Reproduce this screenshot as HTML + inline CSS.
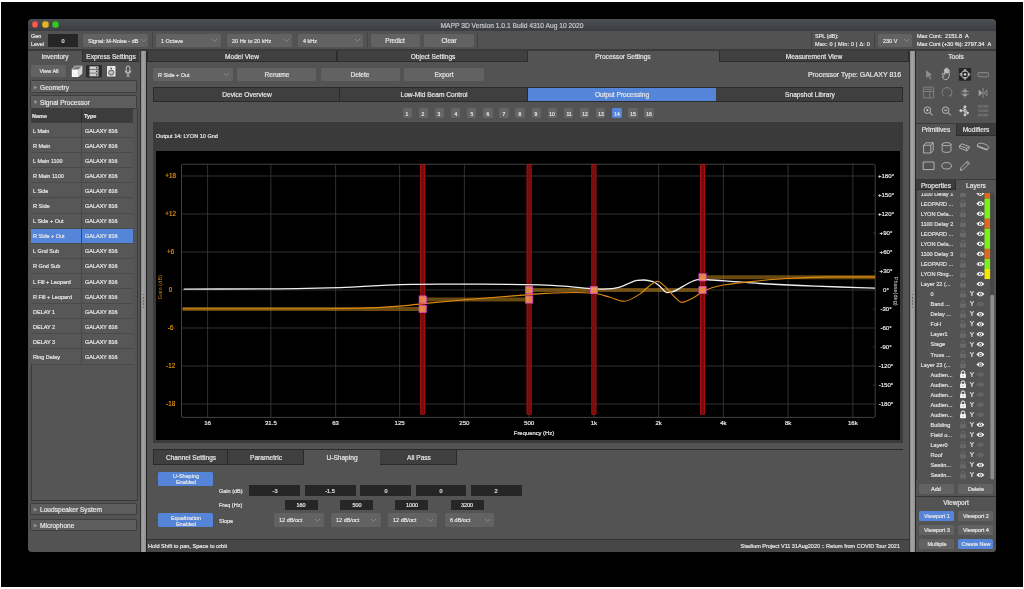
<!DOCTYPE html>
<html><head><meta charset="utf-8"><style>
html,body{margin:0;padding:0;}
body{width:1024px;height:589px;background:#fff;position:relative;overflow:hidden;font-family:"Liberation Sans",sans-serif;}
.a{position:absolute;box-sizing:border-box;}
.a>svg,svg.a{will-change:transform;}
.t{white-space:nowrap;will-change:transform;-webkit-text-stroke:0.2px currentColor;}
</style></head><body>
<div class="a " style="left:1.1px;top:2.1px;width:1022px;height:584.8px;background:#000;"></div>
<div class="a " style="left:28px;top:19px;width:968px;height:532.9px;background:#535353;border-radius:4px;overflow:hidden;"></div>
<div class="a " style="left:28px;top:19px;width:968px;height:12px;background:linear-gradient(#4b4e53,#3a3d42);border-radius:5px 5px 0 0;"></div>
<div class="a " style="left:31.950000000000003px;top:21.45px;width:6.5px;height:6.5px;background:#fc5b53;border-radius:50%;box-shadow:inset 0 0 0 0.7px rgba(0,0,0,0.22);"></div>
<div class="a " style="left:42.05px;top:21.45px;width:6.5px;height:6.5px;background:#e2b62a;border-radius:50%;box-shadow:inset 0 0 0 0.7px rgba(0,0,0,0.22);"></div>
<div class="a " style="left:52.25px;top:21.45px;width:6.5px;height:6.5px;background:#38c42a;border-radius:50%;box-shadow:inset 0 0 0 0.7px rgba(0,0,0,0.22);"></div>
<div class="a t" style="left:312px;top:21.62px;width:400px;text-align:center;font-size:6.7px;line-height:8.04px;color:#c8c8c8;">MAPP 3D Version 1.0.1 Build 4310 Aug 10 2020</div>
<div class="a " style="left:28px;top:30.5px;width:968px;height:18px;background:#525252;"></div>
<div class="a " style="left:28px;top:48.5px;width:968px;height:2px;background:#3a3a3a;"></div>
<div class="a t" style="left:31px;top:33.44px;font-size:5.5px;line-height:6.60px;color:#e6e6e6;">Gen</div>
<div class="a t" style="left:30.8px;top:41.14px;font-size:5.5px;line-height:6.60px;color:#e6e6e6;">Level</div>
<div class="a " style="left:48px;top:34px;width:30px;height:12.7px;background:#262626;"></div>
<div class="a t" style="left:-137px;top:37.54px;width:400px;text-align:center;font-size:5.5px;line-height:6.60px;color:#e6e6e6;">0</div>
<div class="a " style="left:83px;top:34px;width:65px;height:13px;background:#626262;border-radius:1.5px;"></div>
<div class="a t" style="left:87.5px;top:37.64px;font-size:5.5px;line-height:6.60px;color:#e6e6e6;">Signal: M-Noise - dB</div>
<svg class="a" style="left:139.5px;top:38.2px" width="7" height="4.6"><polyline points="1,1 3.5,3.6 6,1" fill="none" stroke="#9a9a9a" stroke-width="0.7"/></svg>
<div class="a " style="left:151.5px;top:32px;width:1.2px;height:17px;background:#444;"></div>
<div class="a " style="left:156px;top:34px;width:65px;height:13px;background:#626262;border-radius:1.5px;"></div>
<div class="a t" style="left:161px;top:37.64px;font-size:5.5px;line-height:6.60px;color:#e6e6e6;">1 Octave</div>
<svg class="a" style="left:211.0px;top:38.2px" width="7" height="4.6"><polyline points="1,1 3.5,3.6 6,1" fill="none" stroke="#9a9a9a" stroke-width="0.7"/></svg>
<div class="a " style="left:226.6px;top:34px;width:65.4px;height:13px;background:#626262;border-radius:1.5px;"></div>
<div class="a t" style="left:231.7px;top:37.64px;font-size:5.5px;line-height:6.60px;color:#e6e6e6;">20 Hz to 20 kHz</div>
<svg class="a" style="left:282.5px;top:38.2px" width="7" height="4.6"><polyline points="1,1 3.5,3.6 6,1" fill="none" stroke="#9a9a9a" stroke-width="0.7"/></svg>
<div class="a " style="left:297.7px;top:34px;width:65.8px;height:13px;background:#626262;border-radius:1.5px;"></div>
<div class="a t" style="left:303px;top:37.64px;font-size:5.5px;line-height:6.60px;color:#e6e6e6;">4 kHz</div>
<svg class="a" style="left:353.5px;top:38.2px" width="7" height="4.6"><polyline points="1,1 3.5,3.6 6,1" fill="none" stroke="#9a9a9a" stroke-width="0.7"/></svg>
<div class="a " style="left:366.5px;top:32px;width:1.2px;height:17px;background:#444;"></div>
<div class="a " style="left:370.5px;top:34px;width:49.5px;height:13px;background:#626262;border-radius:1.5px;"></div>
<div class="a t" style="left:195.25px;top:37.24px;width:400px;text-align:center;font-size:6.27px;line-height:7.52px;color:#e6e6e6;">Predict</div>
<div class="a " style="left:424px;top:34px;width:49.5px;height:13px;background:#626262;border-radius:1.5px;"></div>
<div class="a t" style="left:248.75px;top:37.24px;width:400px;text-align:center;font-size:6.27px;line-height:7.52px;color:#e6e6e6;">Clear</div>
<div class="a " style="left:476.8px;top:32px;width:1.2px;height:17px;background:#444;"></div>
<div class="a " style="left:810.5px;top:32px;width:1.2px;height:17px;background:#444;"></div>
<div class="a t" style="left:815.2px;top:33.34px;font-size:5.5px;line-height:6.60px;color:#e6e6e6;">SPL (dB):</div>
<div class="a t" style="left:815.2px;top:40.74px;font-size:5.5px;line-height:6.60px;color:#e6e6e6;letter-spacing:0.22px;">Max: 0 | Min: 0 | &#916;: 0</div>
<div class="a " style="left:874px;top:32px;width:1.2px;height:17px;background:#444;"></div>
<div class="a " style="left:877.7px;top:34px;width:34.6px;height:13px;background:#626262;border-radius:1.5px;"></div>
<div class="a t" style="left:882.6px;top:37.64px;font-size:5.5px;line-height:6.60px;color:#e6e6e6;">230 V</div>
<svg class="a" style="left:902.9px;top:38.2px" width="7" height="4.6"><polyline points="1,1 3.5,3.6 6,1" fill="none" stroke="#9a9a9a" stroke-width="0.7"/></svg>
<div class="a t" style="left:916.8px;top:33.34px;font-size:5.5px;line-height:6.60px;color:#e6e6e6;">Max Cont:&nbsp; 2151.8 &nbsp;A</div>
<div class="a t" style="left:916.8px;top:40.74px;font-size:5.5px;line-height:6.60px;color:#e6e6e6;">Max Cont (+30 %): 2797.34 &nbsp;A</div>
<div class="a " style="left:139.79999999999998px;top:50.5px;width:1.3px;height:501.4px;background:#333;"></div>
<div class="a " style="left:141.1px;top:50.5px;width:4.8px;height:501.4px;background:linear-gradient(90deg,#8a8a8a,#a4a4a4 40%,#8f8f8f);"></div>
<div class="a " style="left:145.9px;top:50.5px;width:1.4px;height:501.4px;background:#262626;"></div>
<div class="a " style="left:143.0px;top:294.1px;width:1.3px;height:1.4px;background:#686868;"></div>
<div class="a " style="left:143.0px;top:297.20000000000005px;width:1.3px;height:1.4px;background:#686868;"></div>
<div class="a " style="left:143.0px;top:300.3px;width:1.3px;height:1.4px;background:#686868;"></div>
<div class="a " style="left:143.0px;top:303.40000000000003px;width:1.3px;height:1.4px;background:#686868;"></div>
<div class="a " style="left:143.0px;top:306.5px;width:1.3px;height:1.4px;background:#686868;"></div>
<div class="a " style="left:908.6px;top:50.5px;width:1.3px;height:501.4px;background:#333;"></div>
<div class="a " style="left:909.9px;top:50.5px;width:4.8px;height:501.4px;background:linear-gradient(90deg,#8a8a8a,#a4a4a4 40%,#8f8f8f);"></div>
<div class="a " style="left:914.6999999999999px;top:50.5px;width:1.4px;height:501.4px;background:#262626;"></div>
<div class="a " style="left:911.8px;top:294.1px;width:1.3px;height:1.4px;background:#686868;"></div>
<div class="a " style="left:911.8px;top:297.20000000000005px;width:1.3px;height:1.4px;background:#686868;"></div>
<div class="a " style="left:911.8px;top:300.3px;width:1.3px;height:1.4px;background:#686868;"></div>
<div class="a " style="left:911.8px;top:303.40000000000003px;width:1.3px;height:1.4px;background:#686868;"></div>
<div class="a " style="left:911.8px;top:306.5px;width:1.3px;height:1.4px;background:#686868;"></div>
<div class="a " style="left:28px;top:50.5px;width:54px;height:11.8px;background:#535353;"></div>
<div class="a " style="left:82px;top:50.5px;width:57px;height:11.8px;background:#3c3c3c;border-left:1px solid #2e2e2e;border-bottom:1px solid #2e2e2e;"></div>
<div class="a t" style="left:-145px;top:52.97px;width:400px;text-align:center;font-size:6.6px;line-height:7.92px;color:#e6e6e6;">Inventory</div>
<div class="a t" style="left:-89.4px;top:52.97px;width:400px;text-align:center;font-size:6.6px;line-height:7.92px;color:#e6e6e6;">Express Settings</div>
<div class="a " style="left:31px;top:65px;width:35px;height:12px;background:#626262;border-radius:1.5px;"></div>
<div class="a t" style="left:-151.5px;top:68.14px;width:400px;text-align:center;font-size:5.5px;line-height:6.60px;color:#e6e6e6;">View All</div>
<svg class="a" style="left:70px;top:64px" width="68" height="15" viewBox="70 64 68 15">
<polygon points="71.8,69.8 74.6,66.1 82.3,66.1 78.6,69.8" fill="#7a7a7a" stroke="#e8e8e8" stroke-width="0.6"/>
<polygon points="78.6,69.8 82.3,66.1 82.3,73.4 78.6,77" fill="#d8d8d8"/>
<rect x="71.8" y="69.8" width="6.8" height="7.2" fill="#f4f4f4"/>
<rect x="86" y="65" width="16" height="12.5" rx="1" fill="#2b2b2b"/>
<rect x="89.5" y="66.3" width="9" height="3" fill="#cfcfcf"/>
<rect x="89.5" y="69.8" width="9" height="3" fill="#cfcfcf"/>
<rect x="89.5" y="73.3" width="9" height="3" fill="#cfcfcf"/>
<rect x="96" y="67.2" width="1.5" height="1.2" fill="#333"/><rect x="96" y="70.7" width="1.5" height="1.2" fill="#333"/><rect x="96" y="74.2" width="1.5" height="1.2" fill="#333"/>
<rect x="107" y="66" width="8.5" height="10.5" fill="#e6e6e6"/>
<circle cx="111.2" cy="72.6" r="2.5" fill="none" stroke="#3a3a3a" stroke-width="0.9"/>
<circle cx="111.2" cy="72.6" r="1.1" fill="none" stroke="#777" stroke-width="0.5"/>
<circle cx="111.2" cy="68.4" r="0.8" fill="#555"/>
<rect x="126.3" y="66" width="3.5" height="6.5" rx="1.75" fill="none" stroke="#e0e0e0" stroke-width="0.8"/>
<path d="M125,70.5 a3,3 0 0 0 6,0 M128,73.5 v2.5 M126.3,76 h3.5" fill="none" stroke="#e0e0e0" stroke-width="0.7"/>
</svg>
<div class="a " style="left:30.1px;top:80.4px;width:107.4px;height:13.1px;background:#5d5d5d;border:1px solid #3e3e3e;border-radius:1.5px;"></div>
<div class="a t" style="left:33.6px;top:84.09px;font-size:5.5px;line-height:6.60px;color:#9a9a9a;">&#9656;</div>
<div class="a t" style="left:39.9px;top:83.72px;font-size:6.6px;line-height:7.92px;color:#e6e6e6;">Geometry</div>
<div class="a " style="left:30.1px;top:95.3px;width:107.4px;height:13.6px;background:#5d5d5d;border:1px solid #3e3e3e;border-radius:1.5px;"></div>
<div class="a t" style="left:33.6px;top:99.24px;font-size:5.5px;line-height:6.60px;color:#9a9a9a;">&#9662;</div>
<div class="a t" style="left:39.9px;top:98.87px;font-size:6.6px;line-height:7.92px;color:#e6e6e6;">Signal Processor</div>
<div class="a " style="left:30.5px;top:109px;width:107px;height:391.5px;background:#555;border:1px solid #3a3a3a;border-top:none;"></div>
<div class="a " style="left:31px;top:109px;width:50.5px;height:14px;background:#3c3c3c;border-right:1px solid #2a2a2a;"></div>
<div class="a " style="left:81.5px;top:109px;width:51.8px;height:14px;background:#3c3c3c;"></div>
<div class="a t" style="left:32.3px;top:113.14px;font-size:5.5px;line-height:6.60px;color:#e6e6e6;"><b>Name</b></div>
<div class="a t" style="left:84px;top:113.14px;font-size:5.5px;line-height:6.60px;color:#e6e6e6;"><b>Type</b></div>
<div class="a " style="left:133.3px;top:109px;width:3.7px;height:391px;background:#545454;"></div>
<div class="a " style="left:31px;top:123.0px;width:50.5px;height:15.1px;background:#575757;border-bottom:1px solid #4a4a4a;border-right:1px solid #484848;"></div>
<div class="a " style="left:81.5px;top:123.0px;width:51.8px;height:15.1px;background:#575757;border-bottom:1px solid #4a4a4a;"></div>
<div class="a t" style="left:32.5px;top:127.54px;font-size:5.5px;line-height:6.60px;color:#e6e6e6;">L Main</div>
<div class="a t" style="left:84.5px;top:127.54px;font-size:5.5px;line-height:6.60px;color:#e6e6e6;">GALAXY 816</div>
<div class="a " style="left:31px;top:138.1px;width:50.5px;height:15.1px;background:#575757;border-bottom:1px solid #4a4a4a;border-right:1px solid #484848;"></div>
<div class="a " style="left:81.5px;top:138.1px;width:51.8px;height:15.1px;background:#575757;border-bottom:1px solid #4a4a4a;"></div>
<div class="a t" style="left:32.5px;top:142.64px;font-size:5.5px;line-height:6.60px;color:#e6e6e6;">R Main</div>
<div class="a t" style="left:84.5px;top:142.64px;font-size:5.5px;line-height:6.60px;color:#e6e6e6;">GALAXY 816</div>
<div class="a " style="left:31px;top:153.2px;width:50.5px;height:15.1px;background:#575757;border-bottom:1px solid #4a4a4a;border-right:1px solid #484848;"></div>
<div class="a " style="left:81.5px;top:153.2px;width:51.8px;height:15.1px;background:#575757;border-bottom:1px solid #4a4a4a;"></div>
<div class="a t" style="left:32.5px;top:157.74px;font-size:5.5px;line-height:6.60px;color:#e6e6e6;">L Main 1100</div>
<div class="a t" style="left:84.5px;top:157.74px;font-size:5.5px;line-height:6.60px;color:#e6e6e6;">GALAXY 816</div>
<div class="a " style="left:31px;top:168.3px;width:50.5px;height:15.1px;background:#575757;border-bottom:1px solid #4a4a4a;border-right:1px solid #484848;"></div>
<div class="a " style="left:81.5px;top:168.3px;width:51.8px;height:15.1px;background:#575757;border-bottom:1px solid #4a4a4a;"></div>
<div class="a t" style="left:32.5px;top:172.84px;font-size:5.5px;line-height:6.60px;color:#e6e6e6;">R Main 1100</div>
<div class="a t" style="left:84.5px;top:172.84px;font-size:5.5px;line-height:6.60px;color:#e6e6e6;">GALAXY 816</div>
<div class="a " style="left:31px;top:183.4px;width:50.5px;height:15.1px;background:#575757;border-bottom:1px solid #4a4a4a;border-right:1px solid #484848;"></div>
<div class="a " style="left:81.5px;top:183.4px;width:51.8px;height:15.1px;background:#575757;border-bottom:1px solid #4a4a4a;"></div>
<div class="a t" style="left:32.5px;top:187.94px;font-size:5.5px;line-height:6.60px;color:#e6e6e6;">L Side</div>
<div class="a t" style="left:84.5px;top:187.94px;font-size:5.5px;line-height:6.60px;color:#e6e6e6;">GALAXY 816</div>
<div class="a " style="left:31px;top:198.5px;width:50.5px;height:15.1px;background:#575757;border-bottom:1px solid #4a4a4a;border-right:1px solid #484848;"></div>
<div class="a " style="left:81.5px;top:198.5px;width:51.8px;height:15.1px;background:#575757;border-bottom:1px solid #4a4a4a;"></div>
<div class="a t" style="left:32.5px;top:203.04px;font-size:5.5px;line-height:6.60px;color:#e6e6e6;">R Side</div>
<div class="a t" style="left:84.5px;top:203.04px;font-size:5.5px;line-height:6.60px;color:#e6e6e6;">GALAXY 816</div>
<div class="a " style="left:31px;top:213.6px;width:50.5px;height:15.1px;background:#575757;border-bottom:1px solid #4a4a4a;border-right:1px solid #484848;"></div>
<div class="a " style="left:81.5px;top:213.6px;width:51.8px;height:15.1px;background:#575757;border-bottom:1px solid #4a4a4a;"></div>
<div class="a t" style="left:32.5px;top:218.14px;font-size:5.5px;line-height:6.60px;color:#e6e6e6;">L Side + Out</div>
<div class="a t" style="left:84.5px;top:218.14px;font-size:5.5px;line-height:6.60px;color:#e6e6e6;">GALAXY 816</div>
<div class="a " style="left:31px;top:228.7px;width:50.5px;height:15.1px;background:#5585d8;border-bottom:1px solid #4a4a4a;border-right:1px solid #484848;"></div>
<div class="a " style="left:81.5px;top:228.7px;width:51.8px;height:15.1px;background:#5585d8;border-bottom:1px solid #4a4a4a;"></div>
<div class="a t" style="left:32.5px;top:233.24px;font-size:5.5px;line-height:6.60px;color:#e6e6e6;">R Side + Out</div>
<div class="a t" style="left:84.5px;top:233.24px;font-size:5.5px;line-height:6.60px;color:#e6e6e6;">GALAXY 816</div>
<div class="a " style="left:31px;top:243.8px;width:50.5px;height:15.1px;background:#575757;border-bottom:1px solid #4a4a4a;border-right:1px solid #484848;"></div>
<div class="a " style="left:81.5px;top:243.8px;width:51.8px;height:15.1px;background:#575757;border-bottom:1px solid #4a4a4a;"></div>
<div class="a t" style="left:32.5px;top:248.34px;font-size:5.5px;line-height:6.60px;color:#e6e6e6;">L Gnd Sub</div>
<div class="a t" style="left:84.5px;top:248.34px;font-size:5.5px;line-height:6.60px;color:#e6e6e6;">GALAXY 816</div>
<div class="a " style="left:31px;top:258.9px;width:50.5px;height:15.1px;background:#575757;border-bottom:1px solid #4a4a4a;border-right:1px solid #484848;"></div>
<div class="a " style="left:81.5px;top:258.9px;width:51.8px;height:15.1px;background:#575757;border-bottom:1px solid #4a4a4a;"></div>
<div class="a t" style="left:32.5px;top:263.44px;font-size:5.5px;line-height:6.60px;color:#e6e6e6;">R Gnd Sub</div>
<div class="a t" style="left:84.5px;top:263.44px;font-size:5.5px;line-height:6.60px;color:#e6e6e6;">GALAXY 816</div>
<div class="a " style="left:31px;top:274.0px;width:50.5px;height:15.1px;background:#575757;border-bottom:1px solid #4a4a4a;border-right:1px solid #484848;"></div>
<div class="a " style="left:81.5px;top:274.0px;width:51.8px;height:15.1px;background:#575757;border-bottom:1px solid #4a4a4a;"></div>
<div class="a t" style="left:32.5px;top:278.54px;font-size:5.5px;line-height:6.60px;color:#e6e6e6;">L Fill + Leopard</div>
<div class="a t" style="left:84.5px;top:278.54px;font-size:5.5px;line-height:6.60px;color:#e6e6e6;">GALAXY 816</div>
<div class="a " style="left:31px;top:289.1px;width:50.5px;height:15.1px;background:#575757;border-bottom:1px solid #4a4a4a;border-right:1px solid #484848;"></div>
<div class="a " style="left:81.5px;top:289.1px;width:51.8px;height:15.1px;background:#575757;border-bottom:1px solid #4a4a4a;"></div>
<div class="a t" style="left:32.5px;top:293.64px;font-size:5.5px;line-height:6.60px;color:#e6e6e6;">R Fill + Leopard</div>
<div class="a t" style="left:84.5px;top:293.64px;font-size:5.5px;line-height:6.60px;color:#e6e6e6;">GALAXY 816</div>
<div class="a " style="left:31px;top:304.2px;width:50.5px;height:15.1px;background:#575757;border-bottom:1px solid #4a4a4a;border-right:1px solid #484848;"></div>
<div class="a " style="left:81.5px;top:304.2px;width:51.8px;height:15.1px;background:#575757;border-bottom:1px solid #4a4a4a;"></div>
<div class="a t" style="left:32.5px;top:308.74px;font-size:5.5px;line-height:6.60px;color:#e6e6e6;">DELAY 1</div>
<div class="a t" style="left:84.5px;top:308.74px;font-size:5.5px;line-height:6.60px;color:#e6e6e6;">GALAXY 816</div>
<div class="a " style="left:31px;top:319.29999999999995px;width:50.5px;height:15.1px;background:#575757;border-bottom:1px solid #4a4a4a;border-right:1px solid #484848;"></div>
<div class="a " style="left:81.5px;top:319.29999999999995px;width:51.8px;height:15.1px;background:#575757;border-bottom:1px solid #4a4a4a;"></div>
<div class="a t" style="left:32.5px;top:323.84px;font-size:5.5px;line-height:6.60px;color:#e6e6e6;">DELAY 2</div>
<div class="a t" style="left:84.5px;top:323.84px;font-size:5.5px;line-height:6.60px;color:#e6e6e6;">GALAXY 816</div>
<div class="a " style="left:31px;top:334.4px;width:50.5px;height:15.1px;background:#575757;border-bottom:1px solid #4a4a4a;border-right:1px solid #484848;"></div>
<div class="a " style="left:81.5px;top:334.4px;width:51.8px;height:15.1px;background:#575757;border-bottom:1px solid #4a4a4a;"></div>
<div class="a t" style="left:32.5px;top:338.94px;font-size:5.5px;line-height:6.60px;color:#e6e6e6;">DELAY 3</div>
<div class="a t" style="left:84.5px;top:338.94px;font-size:5.5px;line-height:6.60px;color:#e6e6e6;">GALAXY 816</div>
<div class="a " style="left:31px;top:349.5px;width:50.5px;height:15.1px;background:#575757;border-bottom:1px solid #4a4a4a;border-right:1px solid #484848;"></div>
<div class="a " style="left:81.5px;top:349.5px;width:51.8px;height:15.1px;background:#575757;border-bottom:1px solid #4a4a4a;"></div>
<div class="a t" style="left:32.5px;top:354.04px;font-size:5.5px;line-height:6.60px;color:#e6e6e6;">Ring Delay</div>
<div class="a t" style="left:84.5px;top:354.04px;font-size:5.5px;line-height:6.60px;color:#e6e6e6;">GALAXY 816</div>
<div class="a " style="left:30.1px;top:502.6px;width:107.4px;height:12.8px;background:#5d5d5d;border:1px solid #3e3e3e;border-radius:1.5px;"></div>
<div class="a t" style="left:33.6px;top:506.14px;font-size:5.5px;line-height:6.60px;color:#9a9a9a;">&#9656;</div>
<div class="a t" style="left:39.9px;top:505.77px;font-size:6.6px;line-height:7.92px;color:#e6e6e6;">Loudspeaker System</div>
<div class="a " style="left:30.1px;top:518.7px;width:107.4px;height:12.8px;background:#5d5d5d;border:1px solid #3e3e3e;border-radius:1.5px;"></div>
<div class="a t" style="left:33.6px;top:522.24px;font-size:5.5px;line-height:6.60px;color:#9a9a9a;">&#9656;</div>
<div class="a t" style="left:39.9px;top:521.87px;font-size:6.6px;line-height:7.92px;color:#e6e6e6;">Microphone</div>
<div class="a " style="left:147.2px;top:50.5px;width:761.4px;height:501.4px;background:#535353;"></div>
<div class="a " style="left:147.2px;top:50.5px;width:189.8px;height:11.5px;background:#404040;border-left:1px solid #2c2c2c;border-right:1px solid #2c2c2c;border-bottom:1px solid #2c2c2c;"></div>
<div class="a t" style="left:42.099999999999994px;top:52.87px;width:400px;text-align:center;font-size:6.6px;line-height:7.92px;color:#e6e6e6;">Model View</div>
<div class="a " style="left:337px;top:50.5px;width:191px;height:11.5px;background:#404040;border-left:1px solid #2c2c2c;border-right:1px solid #2c2c2c;border-bottom:1px solid #2c2c2c;"></div>
<div class="a t" style="left:232.5px;top:52.87px;width:400px;text-align:center;font-size:6.6px;line-height:7.92px;color:#e6e6e6;">Object Settings</div>
<div class="a " style="left:528px;top:50.5px;width:190.5px;height:11.5px;background:#535353;"></div>
<div class="a t" style="left:423.25px;top:52.87px;width:400px;text-align:center;font-size:6.6px;line-height:7.92px;color:#e6e6e6;">Processor Settings</div>
<div class="a " style="left:718.5px;top:50.5px;width:190.29999999999995px;height:11.5px;background:#404040;border-left:1px solid #2c2c2c;border-right:1px solid #2c2c2c;border-bottom:1px solid #2c2c2c;"></div>
<div class="a t" style="left:613.65px;top:52.87px;width:400px;text-align:center;font-size:6.6px;line-height:7.92px;color:#e6e6e6;">Measurement View</div>
<div class="a " style="left:153px;top:68px;width:80px;height:13px;background:#626262;border-radius:1.5px;"></div>
<div class="a t" style="left:158px;top:71.64px;font-size:5.5px;line-height:6.60px;color:#e6e6e6;">R Side + Out</div>
<svg class="a" style="left:223.0px;top:72.2px" width="7" height="4.6"><polyline points="1,1 3.5,3.6 6,1" fill="none" stroke="#9a9a9a" stroke-width="0.7"/></svg>
<div class="a " style="left:237px;top:68px;width:79px;height:13px;background:#626262;border-radius:1.5px;"></div>
<div class="a t" style="left:76.5px;top:71.07px;width:400px;text-align:center;font-size:6.6px;line-height:7.92px;color:#e6e6e6;">Rename</div>
<div class="a " style="left:320.5px;top:68px;width:79.5px;height:13px;background:#626262;border-radius:1.5px;"></div>
<div class="a t" style="left:160.25px;top:71.07px;width:400px;text-align:center;font-size:6.6px;line-height:7.92px;color:#e6e6e6;">Delete</div>
<div class="a " style="left:404px;top:68px;width:80px;height:13px;background:#626262;border-radius:1.5px;"></div>
<div class="a t" style="left:244.0px;top:71.07px;width:400px;text-align:center;font-size:6.6px;line-height:7.92px;color:#e6e6e6;">Export</div>
<div class="a t" style="left:501.29999999999995px;top:71.19px;width:400px;text-align:right;font-size:6.95px;line-height:8.34px;color:#e6e6e6;">Processor Type: GALAXY 816</div>
<div class="a " style="left:153px;top:86.8px;width:187px;height:14.8px;background:#3f3f3f;border:1px solid #2a2a2a;"></div>
<div class="a t" style="left:46.5px;top:90.87px;width:400px;text-align:center;font-size:6.6px;line-height:7.92px;color:#e6e6e6;">Device Overview</div>
<div class="a " style="left:340px;top:86.8px;width:188px;height:14.8px;background:#3f3f3f;border:1px solid #2a2a2a;border-left:none;"></div>
<div class="a t" style="left:234.0px;top:90.87px;width:400px;text-align:center;font-size:6.6px;line-height:7.92px;color:#e6e6e6;">Low-Mid Beam Control</div>
<div class="a " style="left:528px;top:86.8px;width:188px;height:14.8px;background:#5585d8;border:1px solid #2c2c2c;border-left:none;border-right:none;"></div>
<div class="a t" style="left:422.0px;top:90.87px;width:400px;text-align:center;font-size:6.6px;line-height:7.92px;color:#e6e6e6;">Output Processing</div>
<div class="a " style="left:716px;top:86.8px;width:187.20000000000005px;height:14.8px;background:#3f3f3f;border:1px solid #2a2a2a;border-left:none;"></div>
<div class="a t" style="left:609.6px;top:90.87px;width:400px;text-align:center;font-size:6.6px;line-height:7.92px;color:#e6e6e6;">Snapshot Library</div>
<div class="a " style="left:402.5px;top:108px;width:9.4px;height:10.3px;background:#656565;border-radius:1.5px;"></div>
<div class="a t" style="left:207.2px;top:110.60px;width:400px;text-align:center;font-size:5.0px;line-height:6.00px;color:#e6e6e6;">1</div>
<div class="a " style="left:418.63px;top:108px;width:9.4px;height:10.3px;background:#656565;border-radius:1.5px;"></div>
<div class="a t" style="left:223.32999999999998px;top:110.60px;width:400px;text-align:center;font-size:5.0px;line-height:6.00px;color:#e6e6e6;">2</div>
<div class="a " style="left:434.76px;top:108px;width:9.4px;height:10.3px;background:#656565;border-radius:1.5px;"></div>
<div class="a t" style="left:239.45999999999998px;top:110.60px;width:400px;text-align:center;font-size:5.0px;line-height:6.00px;color:#e6e6e6;">3</div>
<div class="a " style="left:450.89px;top:108px;width:9.4px;height:10.3px;background:#656565;border-radius:1.5px;"></div>
<div class="a t" style="left:255.58999999999997px;top:110.60px;width:400px;text-align:center;font-size:5.0px;line-height:6.00px;color:#e6e6e6;">4</div>
<div class="a " style="left:467.02px;top:108px;width:9.4px;height:10.3px;background:#656565;border-radius:1.5px;"></div>
<div class="a t" style="left:271.71999999999997px;top:110.60px;width:400px;text-align:center;font-size:5.0px;line-height:6.00px;color:#e6e6e6;">5</div>
<div class="a " style="left:483.15px;top:108px;width:9.4px;height:10.3px;background:#656565;border-radius:1.5px;"></div>
<div class="a t" style="left:287.84999999999997px;top:110.60px;width:400px;text-align:center;font-size:5.0px;line-height:6.00px;color:#e6e6e6;">6</div>
<div class="a " style="left:499.28000000000003px;top:108px;width:9.4px;height:10.3px;background:#656565;border-radius:1.5px;"></div>
<div class="a t" style="left:303.98px;top:110.60px;width:400px;text-align:center;font-size:5.0px;line-height:6.00px;color:#e6e6e6;">7</div>
<div class="a " style="left:515.41px;top:108px;width:9.4px;height:10.3px;background:#656565;border-radius:1.5px;"></div>
<div class="a t" style="left:320.11px;top:110.60px;width:400px;text-align:center;font-size:5.0px;line-height:6.00px;color:#e6e6e6;">8</div>
<div class="a " style="left:531.54px;top:108px;width:9.4px;height:10.3px;background:#656565;border-radius:1.5px;"></div>
<div class="a t" style="left:336.24px;top:110.60px;width:400px;text-align:center;font-size:5.0px;line-height:6.00px;color:#e6e6e6;">9</div>
<div class="a " style="left:547.67px;top:108px;width:9.4px;height:10.3px;background:#656565;border-radius:1.5px;"></div>
<div class="a t" style="left:352.37px;top:110.60px;width:400px;text-align:center;font-size:5.0px;line-height:6.00px;color:#e6e6e6;">10</div>
<div class="a " style="left:563.8px;top:108px;width:9.4px;height:10.3px;background:#656565;border-radius:1.5px;"></div>
<div class="a t" style="left:368.5px;top:110.60px;width:400px;text-align:center;font-size:5.0px;line-height:6.00px;color:#e6e6e6;">11</div>
<div class="a " style="left:579.93px;top:108px;width:9.4px;height:10.3px;background:#656565;border-radius:1.5px;"></div>
<div class="a t" style="left:384.63px;top:110.60px;width:400px;text-align:center;font-size:5.0px;line-height:6.00px;color:#e6e6e6;">12</div>
<div class="a " style="left:596.06px;top:108px;width:9.4px;height:10.3px;background:#656565;border-radius:1.5px;"></div>
<div class="a t" style="left:400.76px;top:110.60px;width:400px;text-align:center;font-size:5.0px;line-height:6.00px;color:#e6e6e6;">13</div>
<div class="a " style="left:612.1899999999999px;top:108px;width:9.4px;height:10.3px;background:#5585d8;border-radius:1.5px;"></div>
<div class="a t" style="left:416.89px;top:110.60px;width:400px;text-align:center;font-size:5.0px;line-height:6.00px;color:#e6e6e6;">14</div>
<div class="a " style="left:628.3199999999999px;top:108px;width:9.4px;height:10.3px;background:#656565;border-radius:1.5px;"></div>
<div class="a t" style="left:433.02px;top:110.60px;width:400px;text-align:center;font-size:5.0px;line-height:6.00px;color:#e6e6e6;">15</div>
<div class="a " style="left:644.4499999999999px;top:108px;width:9.4px;height:10.3px;background:#656565;border-radius:1.5px;"></div>
<div class="a t" style="left:449.15px;top:110.60px;width:400px;text-align:center;font-size:5.0px;line-height:6.00px;color:#e6e6e6;">16</div>
<div class="a " style="left:153px;top:121.5px;width:750.2px;height:321px;background:#3a3a3a;"></div>
<div class="a t" style="left:155.7px;top:133.11px;font-size:5.55px;line-height:6.66px;color:#e6e6e6;">Output 14: LYON 10 Gnd</div>
<div class="a " style="left:156px;top:151px;width:744px;height:289px;background:#000;"></div>
<svg class="a" style="left:156px;top:151px" width="744" height="289" viewBox="156 151 744 289">
<rect x="156" y="151" width="744" height="289" fill="#000"/>
<line x1="181.5" y1="176" x2="875.2" y2="176" stroke="#363636" stroke-width="0.9"/>
<line x1="181.5" y1="214" x2="875.2" y2="214" stroke="#363636" stroke-width="0.9"/>
<line x1="181.5" y1="252" x2="875.2" y2="252" stroke="#363636" stroke-width="0.9"/>
<line x1="181.5" y1="290" x2="875.2" y2="290" stroke="#363636" stroke-width="0.9"/>
<line x1="181.5" y1="328" x2="875.2" y2="328" stroke="#363636" stroke-width="0.9"/>
<line x1="181.5" y1="366" x2="875.2" y2="366" stroke="#363636" stroke-width="0.9"/>
<line x1="181.5" y1="404" x2="875.2" y2="404" stroke="#363636" stroke-width="0.9"/>
<line x1="873.2" y1="195" x2="875.2" y2="195" stroke="#363636" stroke-width="0.9"/>
<line x1="873.2" y1="233" x2="875.2" y2="233" stroke="#363636" stroke-width="0.9"/>
<line x1="873.2" y1="271" x2="875.2" y2="271" stroke="#363636" stroke-width="0.9"/>
<line x1="873.2" y1="309" x2="875.2" y2="309" stroke="#363636" stroke-width="0.9"/>
<line x1="873.2" y1="347" x2="875.2" y2="347" stroke="#363636" stroke-width="0.9"/>
<line x1="873.2" y1="385" x2="875.2" y2="385" stroke="#363636" stroke-width="0.9"/>
<line x1="207.60" y1="164.2" x2="207.60" y2="417.4" stroke="#363636" stroke-width="0.9"/>
<line x1="270.88" y1="164.2" x2="270.88" y2="417.4" stroke="#363636" stroke-width="0.9"/>
<line x1="335.63" y1="164.2" x2="335.63" y2="417.4" stroke="#363636" stroke-width="0.9"/>
<line x1="399.63" y1="164.2" x2="399.63" y2="417.4" stroke="#363636" stroke-width="0.9"/>
<line x1="464.38" y1="164.2" x2="464.38" y2="417.4" stroke="#363636" stroke-width="0.9"/>
<line x1="529.13" y1="164.2" x2="529.13" y2="417.4" stroke="#363636" stroke-width="0.9"/>
<line x1="593.88" y1="164.2" x2="593.88" y2="417.4" stroke="#363636" stroke-width="0.9"/>
<line x1="658.63" y1="164.2" x2="658.63" y2="417.4" stroke="#363636" stroke-width="0.9"/>
<line x1="723.38" y1="164.2" x2="723.38" y2="417.4" stroke="#363636" stroke-width="0.9"/>
<line x1="788.13" y1="164.2" x2="788.13" y2="417.4" stroke="#363636" stroke-width="0.9"/>
<line x1="852.88" y1="164.2" x2="852.88" y2="417.4" stroke="#363636" stroke-width="0.9"/>
<rect x="181.5" y="164.2" width="693.70" height="253.20" rx="1.5" fill="none" stroke="#4a4a4a" stroke-width="0.9"/>
<text x="170.6" y="178.2" text-anchor="middle" font-size="6.3" fill="#e38f10" stroke="#e38f10" stroke-width="0.2" style="font-family:Liberation Sans,sans-serif">+18</text>
<text x="170.6" y="216.2" text-anchor="middle" font-size="6.3" fill="#e38f10" stroke="#e38f10" stroke-width="0.2" style="font-family:Liberation Sans,sans-serif">+12</text>
<text x="170.6" y="254.2" text-anchor="middle" font-size="6.3" fill="#e38f10" stroke="#e38f10" stroke-width="0.2" style="font-family:Liberation Sans,sans-serif">+6</text>
<text x="170.6" y="292.2" text-anchor="middle" font-size="6.3" fill="#e38f10" stroke="#e38f10" stroke-width="0.2" style="font-family:Liberation Sans,sans-serif">0</text>
<text x="170.6" y="330.2" text-anchor="middle" font-size="6.3" fill="#e38f10" stroke="#e38f10" stroke-width="0.2" style="font-family:Liberation Sans,sans-serif">-6</text>
<text x="170.6" y="368.2" text-anchor="middle" font-size="6.3" fill="#e38f10" stroke="#e38f10" stroke-width="0.2" style="font-family:Liberation Sans,sans-serif">-12</text>
<text x="170.6" y="406.2" text-anchor="middle" font-size="6.3" fill="#e38f10" stroke="#e38f10" stroke-width="0.2" style="font-family:Liberation Sans,sans-serif">-18</text>
<text x="886" y="178.1" text-anchor="middle" font-size="6.1" fill="#e6e6e6" stroke="#e6e6e6" stroke-width="0.2" style="font-family:Liberation Sans,sans-serif">+180&#176;</text>
<text x="886" y="197.1" text-anchor="middle" font-size="6.1" fill="#e6e6e6" stroke="#e6e6e6" stroke-width="0.2" style="font-family:Liberation Sans,sans-serif">+150&#176;</text>
<text x="886" y="216.1" text-anchor="middle" font-size="6.1" fill="#e6e6e6" stroke="#e6e6e6" stroke-width="0.2" style="font-family:Liberation Sans,sans-serif">+120&#176;</text>
<text x="886" y="235.1" text-anchor="middle" font-size="6.1" fill="#e6e6e6" stroke="#e6e6e6" stroke-width="0.2" style="font-family:Liberation Sans,sans-serif">+90&#176;</text>
<text x="886" y="254.1" text-anchor="middle" font-size="6.1" fill="#e6e6e6" stroke="#e6e6e6" stroke-width="0.2" style="font-family:Liberation Sans,sans-serif">+60&#176;</text>
<text x="886" y="273.1" text-anchor="middle" font-size="6.1" fill="#e6e6e6" stroke="#e6e6e6" stroke-width="0.2" style="font-family:Liberation Sans,sans-serif">+30&#176;</text>
<text x="886" y="292.1" text-anchor="middle" font-size="6.1" fill="#e6e6e6" stroke="#e6e6e6" stroke-width="0.2" style="font-family:Liberation Sans,sans-serif">0&#176;</text>
<text x="886" y="311.1" text-anchor="middle" font-size="6.1" fill="#e6e6e6" stroke="#e6e6e6" stroke-width="0.2" style="font-family:Liberation Sans,sans-serif">-30&#176;</text>
<text x="886" y="330.1" text-anchor="middle" font-size="6.1" fill="#e6e6e6" stroke="#e6e6e6" stroke-width="0.2" style="font-family:Liberation Sans,sans-serif">-60&#176;</text>
<text x="886" y="349.1" text-anchor="middle" font-size="6.1" fill="#e6e6e6" stroke="#e6e6e6" stroke-width="0.2" style="font-family:Liberation Sans,sans-serif">-90&#176;</text>
<text x="886" y="368.1" text-anchor="middle" font-size="6.1" fill="#e6e6e6" stroke="#e6e6e6" stroke-width="0.2" style="font-family:Liberation Sans,sans-serif">-120&#176;</text>
<text x="886" y="387.1" text-anchor="middle" font-size="6.1" fill="#e6e6e6" stroke="#e6e6e6" stroke-width="0.2" style="font-family:Liberation Sans,sans-serif">-150&#176;</text>
<text x="886" y="406.1" text-anchor="middle" font-size="6.1" fill="#e6e6e6" stroke="#e6e6e6" stroke-width="0.2" style="font-family:Liberation Sans,sans-serif">-180&#176;</text>
<text x="207.60" y="424.6" text-anchor="middle" font-size="6.1" fill="#e6e6e6" stroke="#e6e6e6" stroke-width="0.2" style="font-family:Liberation Sans,sans-serif">16</text>
<text x="270.88" y="424.6" text-anchor="middle" font-size="6.1" fill="#e6e6e6" stroke="#e6e6e6" stroke-width="0.2" style="font-family:Liberation Sans,sans-serif">31.5</text>
<text x="335.63" y="424.6" text-anchor="middle" font-size="6.1" fill="#e6e6e6" stroke="#e6e6e6" stroke-width="0.2" style="font-family:Liberation Sans,sans-serif">63</text>
<text x="399.63" y="424.6" text-anchor="middle" font-size="6.1" fill="#e6e6e6" stroke="#e6e6e6" stroke-width="0.2" style="font-family:Liberation Sans,sans-serif">125</text>
<text x="464.38" y="424.6" text-anchor="middle" font-size="6.1" fill="#e6e6e6" stroke="#e6e6e6" stroke-width="0.2" style="font-family:Liberation Sans,sans-serif">250</text>
<text x="529.13" y="424.6" text-anchor="middle" font-size="6.1" fill="#e6e6e6" stroke="#e6e6e6" stroke-width="0.2" style="font-family:Liberation Sans,sans-serif">500</text>
<text x="593.88" y="424.6" text-anchor="middle" font-size="6.1" fill="#e6e6e6" stroke="#e6e6e6" stroke-width="0.2" style="font-family:Liberation Sans,sans-serif">1k</text>
<text x="658.63" y="424.6" text-anchor="middle" font-size="6.1" fill="#e6e6e6" stroke="#e6e6e6" stroke-width="0.2" style="font-family:Liberation Sans,sans-serif">2k</text>
<text x="723.38" y="424.6" text-anchor="middle" font-size="6.1" fill="#e6e6e6" stroke="#e6e6e6" stroke-width="0.2" style="font-family:Liberation Sans,sans-serif">4k</text>
<text x="788.13" y="424.6" text-anchor="middle" font-size="6.1" fill="#e6e6e6" stroke="#e6e6e6" stroke-width="0.2" style="font-family:Liberation Sans,sans-serif">8k</text>
<text x="852.88" y="424.6" text-anchor="middle" font-size="6.1" fill="#e6e6e6" stroke="#e6e6e6" stroke-width="0.2" style="font-family:Liberation Sans,sans-serif">16k</text>
<text x="534" y="435.3" text-anchor="middle" font-size="5.85" fill="#e6e6e6" stroke="#e6e6e6" stroke-width="0.2" style="font-family:Liberation Sans,sans-serif">Frequency (Hz)</text>
<text transform="translate(161.6,287.1) rotate(-90)" text-anchor="middle" font-size="5.7" fill="#c07a10" style="font-family:Liberation Sans,sans-serif">Gain (dB)</text>
<text transform="translate(894.4,291.2) rotate(90)" text-anchor="middle" font-size="5.6" fill="#d8d8d8" style="font-family:Liberation Sans,sans-serif">Phase(deg)</text>
<rect x="420.14" y="164.3" width="5.1" height="250.5" rx="1.2" fill="#b81414"/>
<rect x="420.94" y="165.1" width="3.5" height="248.9" fill="#7c0a0a"/>
<line x1="422.69" y1="165.1" x2="422.69" y2="414" stroke="#6c1414" stroke-width="0.9"/>
<rect x="526.58" y="164.3" width="5.1" height="250.5" rx="1.2" fill="#b81414"/>
<rect x="527.38" y="165.1" width="3.5" height="248.9" fill="#7c0a0a"/>
<line x1="529.13" y1="165.1" x2="529.13" y2="414" stroke="#6c1414" stroke-width="0.9"/>
<rect x="591.33" y="164.3" width="5.1" height="250.5" rx="1.2" fill="#b81414"/>
<rect x="592.13" y="165.1" width="3.5" height="248.9" fill="#7c0a0a"/>
<line x1="593.88" y1="165.1" x2="593.88" y2="414" stroke="#6c1414" stroke-width="0.9"/>
<rect x="699.99" y="164.3" width="5.1" height="250.5" rx="1.2" fill="#b81414"/>
<rect x="700.79" y="165.1" width="3.5" height="248.9" fill="#7c0a0a"/>
<line x1="702.54" y1="165.1" x2="702.54" y2="414" stroke="#6c1414" stroke-width="0.9"/>
<line x1="182.50" y1="309.00" x2="422.69" y2="309.00" stroke="rgba(190,135,30,0.55)" stroke-width="4"/>
<line x1="422.69" y1="299.50" x2="529.13" y2="299.50" stroke="rgba(190,135,30,0.55)" stroke-width="4"/>
<line x1="529.13" y1="290.00" x2="593.88" y2="290.00" stroke="rgba(190,135,30,0.55)" stroke-width="4"/>
<line x1="593.88" y1="290.00" x2="702.54" y2="290.00" stroke="rgba(190,135,30,0.55)" stroke-width="4"/>
<line x1="702.54" y1="277.33" x2="875.20" y2="277.33" stroke="rgba(190,135,30,0.55)" stroke-width="4"/>
<path d="M183.60,289.10 C209.07,289.03 234.53,289.01 260.00,288.90 C286.67,288.78 313.33,288.27 340.00,287.60 C360.00,287.10 380.00,284.92 400.00,284.60 C413.33,284.39 426.67,284.20 440.00,284.20 C453.33,284.20 466.67,284.20 480.00,284.20 C500.00,284.20 520.00,284.48 540.00,284.90 C550.00,285.11 560.00,285.88 570.00,286.60 C578.00,287.18 586.00,288.66 594.00,288.90 C597.33,289.00 600.67,289.10 604.00,289.10 C606.67,289.10 609.33,288.91 612.00,288.70 C615.33,288.43 618.67,287.43 622.00,286.40 C624.67,285.58 627.33,283.83 630.00,282.80 C632.33,281.89 634.67,280.63 637.00,280.40 C639.33,280.17 641.67,280.00 644.00,280.00 C647.00,280.00 650.00,280.73 653.00,281.60 C655.33,282.28 657.67,284.60 660.00,286.40 C662.33,288.20 664.67,292.60 667.00,292.60 C668.67,292.60 670.33,292.24 672.00,291.90 C675.67,291.15 679.33,288.31 683.00,286.40 C686.33,284.67 689.67,282.09 693.00,281.00 C695.33,280.24 697.67,279.30 700.00,279.30 C704.00,279.30 708.00,279.75 712.00,280.00 C716.33,280.27 720.67,280.59 725.00,280.90 C736.67,281.73 748.33,282.80 760.00,283.50 C773.33,284.30 786.67,284.93 800.00,285.50 C813.33,286.07 826.67,286.52 840.00,287.00 C851.67,287.42 863.33,287.80 875.00,288.20" fill="none" stroke="#f0f0f0" stroke-width="1.3"/>
<path d="M182.70,308.80 C221.80,308.80 260.90,308.80 300.00,308.80 C320.00,308.80 340.00,308.55 360.00,308.20 C373.33,307.97 386.67,307.07 400.00,306.10 C407.67,305.54 415.33,304.37 423.00,303.60 C437.00,302.19 451.00,300.89 465.00,299.70 C483.33,298.14 501.67,296.85 520.00,295.40 C528.33,294.74 536.67,293.76 545.00,293.40 C555.33,292.95 565.67,292.50 576.00,292.50 C582.00,292.50 588.00,292.84 594.00,293.30 C599.33,293.71 604.67,295.89 610.00,297.30 C614.67,298.53 619.33,301.20 624.00,301.20 C629.33,301.20 634.67,297.13 640.00,293.90 C643.33,291.88 646.67,287.75 650.00,285.50 C652.50,283.81 655.00,281.20 657.50,281.20 C660.00,281.20 662.50,284.27 665.00,286.40 C667.67,288.67 670.33,292.83 673.00,295.30 C676.00,298.08 679.00,302.40 682.00,302.40 C685.67,302.40 689.33,299.81 693.00,298.00 C696.33,296.35 699.67,293.29 703.00,291.60 C706.00,290.08 709.00,288.71 712.00,287.80 C716.33,286.48 720.67,285.52 725.00,284.80 C731.33,283.75 737.67,283.10 744.00,282.40 C757.00,280.97 770.00,279.42 783.00,278.70 C798.67,277.83 814.33,276.90 830.00,276.90 C845.00,276.90 860.00,276.90 875.00,276.90" fill="none" stroke="#e08a10" stroke-width="1.1"/>
<rect x="419.09" y="295.90" width="7.2" height="7.2" fill="rgba(236,146,80,0.9)" stroke="#dc3cd4" stroke-width="0.75"/>
<rect x="419.09" y="305.40" width="7.2" height="7.2" fill="rgba(236,146,80,0.9)" stroke="#dc3cd4" stroke-width="0.75"/>
<rect x="525.53" y="295.90" width="7.2" height="7.2" fill="rgba(236,146,80,0.9)" stroke="#dc3cd4" stroke-width="0.75"/>
<rect x="525.53" y="286.40" width="7.2" height="7.2" fill="rgba(236,146,80,0.9)" stroke="#dc3cd4" stroke-width="0.75"/>
<rect x="590.28" y="286.40" width="7.2" height="7.2" fill="rgba(236,146,80,0.9)" stroke="#dc3cd4" stroke-width="0.75"/>
<rect x="698.94" y="286.40" width="7.2" height="7.2" fill="rgba(236,146,80,0.9)" stroke="#dc3cd4" stroke-width="0.75"/>
<rect x="698.94" y="273.73" width="7.2" height="7.2" fill="rgba(236,146,80,0.9)" stroke="#dc3cd4" stroke-width="0.75"/>
</svg>
<div class="a " style="left:153px;top:449px;width:75.30000000000001px;height:16px;background:#3f3f3f;border:1px solid #2a2a2a;"></div>
<div class="a t" style="left:-9.349999999999994px;top:453.77px;width:400px;text-align:center;font-size:6.6px;line-height:7.92px;color:#e6e6e6;">Channel Settings</div>
<div class="a " style="left:228.3px;top:449px;width:75.69999999999999px;height:16px;background:#3f3f3f;border:1px solid #2a2a2a;border-left:none;"></div>
<div class="a t" style="left:66.14999999999998px;top:453.77px;width:400px;text-align:center;font-size:6.6px;line-height:7.92px;color:#e6e6e6;">Parametric</div>
<div class="a " style="left:304px;top:449px;width:76px;height:16px;background:#535353;border-top:1px solid #2a2a2a;"></div>
<div class="a t" style="left:142.0px;top:453.77px;width:400px;text-align:center;font-size:6.6px;line-height:7.92px;color:#e6e6e6;">U-Shaping</div>
<div class="a " style="left:380px;top:449px;width:77px;height:16px;background:#3f3f3f;border:1px solid #2a2a2a;border-left:none;"></div>
<div class="a t" style="left:218.5px;top:453.77px;width:400px;text-align:center;font-size:6.6px;line-height:7.92px;color:#e6e6e6;">All Pass</div>
<div class="a " style="left:457px;top:449px;width:446.2px;height:1px;background:#2a2a2a;"></div>
<div class="a " style="left:158.4px;top:472px;width:54.2px;height:13.8px;background:#5585d8;border-radius:1.5px;"></div>
<div class="a t" style="left:-14.5px;top:473.28px;width:400px;text-align:center;font-size:5.5px;line-height:6.60px;color:#e6e6e6;">U-Shaping</div>
<div class="a t" style="left:-14.5px;top:479.08px;width:400px;text-align:center;font-size:5.5px;line-height:6.60px;color:#e6e6e6;">Enabled</div>
<div class="a " style="left:158.4px;top:513.3px;width:54.2px;height:14.1px;background:#5585d8;border-radius:1.5px;"></div>
<div class="a t" style="left:-14.5px;top:514.67px;width:400px;text-align:center;font-size:5.5px;line-height:6.60px;color:#e6e6e6;">Equalization</div>
<div class="a t" style="left:-14.5px;top:520.59px;width:400px;text-align:center;font-size:5.5px;line-height:6.60px;color:#e6e6e6;">Enabled</div>
<div class="a t" style="left:219px;top:488.04px;font-size:5.5px;line-height:6.60px;color:#e6e6e6;">Gain (dB)</div>
<div class="a t" style="left:219px;top:502.34px;font-size:5.5px;line-height:6.60px;color:#e6e6e6;">Freq (Hz)</div>
<div class="a t" style="left:219px;top:517.64px;font-size:5.5px;line-height:6.60px;color:#e6e6e6;">Slope</div>
<div class="a " style="left:249.4px;top:485.4px;width:50.8px;height:10.4px;background:#262626;"></div>
<div class="a t" style="left:74.80000000000001px;top:487.84px;width:400px;text-align:center;font-size:5.5px;line-height:6.60px;color:#e6e6e6;">-3</div>
<div class="a " style="left:304.8px;top:485.4px;width:50.8px;height:10.4px;background:#262626;"></div>
<div class="a t" style="left:130.2px;top:487.84px;width:400px;text-align:center;font-size:5.5px;line-height:6.60px;color:#e6e6e6;">-1.5</div>
<div class="a " style="left:360.2px;top:485.4px;width:50.8px;height:10.4px;background:#262626;"></div>
<div class="a t" style="left:185.59999999999997px;top:487.84px;width:400px;text-align:center;font-size:5.5px;line-height:6.60px;color:#e6e6e6;">0</div>
<div class="a " style="left:415.6px;top:485.4px;width:50.8px;height:10.4px;background:#262626;"></div>
<div class="a t" style="left:241.0px;top:487.84px;width:400px;text-align:center;font-size:5.5px;line-height:6.60px;color:#e6e6e6;">0</div>
<div class="a " style="left:471.0px;top:485.4px;width:50.8px;height:10.4px;background:#262626;"></div>
<div class="a t" style="left:296.4px;top:487.84px;width:400px;text-align:center;font-size:5.5px;line-height:6.60px;color:#e6e6e6;">2</div>
<div class="a " style="left:284.6px;top:499.6px;width:33.2px;height:10.7px;background:#262626;"></div>
<div class="a t" style="left:101.20000000000005px;top:502.14px;width:400px;text-align:center;font-size:5.5px;line-height:6.60px;color:#e6e6e6;">160</div>
<div class="a " style="left:339.90000000000003px;top:499.6px;width:33.2px;height:10.7px;background:#262626;"></div>
<div class="a t" style="left:156.50000000000006px;top:502.14px;width:400px;text-align:center;font-size:5.5px;line-height:6.60px;color:#e6e6e6;">500</div>
<div class="a " style="left:395.20000000000005px;top:499.6px;width:33.2px;height:10.7px;background:#262626;"></div>
<div class="a t" style="left:211.80000000000007px;top:502.14px;width:400px;text-align:center;font-size:5.5px;line-height:6.60px;color:#e6e6e6;">1000</div>
<div class="a " style="left:450.5px;top:499.6px;width:33.2px;height:10.7px;background:#262626;"></div>
<div class="a t" style="left:267.1px;top:502.14px;width:400px;text-align:center;font-size:5.5px;line-height:6.60px;color:#e6e6e6;">3200</div>
<div class="a " style="left:274.0px;top:513.3px;width:49.7px;height:13.8px;background:#626262;border-radius:1.5px;"></div>
<div class="a t" style="left:279.2px;top:517.34px;font-size:5.5px;line-height:6.60px;color:#e6e6e6;">12 dB/oct</div>
<svg class="a" style="left:313.5px;top:517.9px" width="7" height="4.6"><polyline points="1,1 3.5,3.6 6,1" fill="none" stroke="#9a9a9a" stroke-width="0.7"/></svg>
<div class="a " style="left:330.9px;top:513.3px;width:49.7px;height:13.8px;background:#626262;border-radius:1.5px;"></div>
<div class="a t" style="left:336.09999999999997px;top:517.34px;font-size:5.5px;line-height:6.60px;color:#e6e6e6;">12 dB/oct</div>
<svg class="a" style="left:370.4px;top:517.9px" width="7" height="4.6"><polyline points="1,1 3.5,3.6 6,1" fill="none" stroke="#9a9a9a" stroke-width="0.7"/></svg>
<div class="a " style="left:387.8px;top:513.3px;width:49.7px;height:13.8px;background:#626262;border-radius:1.5px;"></div>
<div class="a t" style="left:393.0px;top:517.34px;font-size:5.5px;line-height:6.60px;color:#e6e6e6;">12 dB/oct</div>
<svg class="a" style="left:427.3px;top:517.9px" width="7" height="4.6"><polyline points="1,1 3.5,3.6 6,1" fill="none" stroke="#9a9a9a" stroke-width="0.7"/></svg>
<div class="a " style="left:444.7px;top:513.3px;width:49.7px;height:13.8px;background:#626262;border-radius:1.5px;"></div>
<div class="a t" style="left:449.9px;top:517.34px;font-size:5.5px;line-height:6.60px;color:#e6e6e6;">6 dB/oct</div>
<svg class="a" style="left:484.2px;top:517.9px" width="7" height="4.6"><polyline points="1,1 3.5,3.6 6,1" fill="none" stroke="#9a9a9a" stroke-width="0.7"/></svg>
<div class="a " style="left:147.2px;top:539.3px;width:761.4px;height:12.4px;background:#474747;border-top:1px solid #333;"></div>
<div class="a t" style="left:147.9px;top:543.09px;font-size:5.6px;line-height:6.72px;color:#e6e6e6;">Hold Shift to pan, Space to orbit</div>
<div class="a t" style="left:500px;top:543.14px;width:400px;text-align:right;font-size:5.5px;line-height:6.60px;color:#e6e6e6;">Stadium Project V11 31Aug2020 :: Return from COVID Tour 2021</div>
<div class="a " style="left:916.3px;top:50.5px;width:79.7px;height:501.4px;background:#535353;border-radius:0 0 4px 0;"></div>
<div class="a t" style="left:755.8px;top:52.77px;width:400px;text-align:center;font-size:6.6px;line-height:7.92px;color:#e6e6e6;">Tools</div>
<svg class="a" style="left:916px;top:62px" width="80" height="60" viewBox="916 62 80 60">
<path d="M925.9,69.9 L926.3,78 L928.3,76.3 L930.2,79.6 L931.4,78.9 L929.6,75.7 L932,75.1 Z" fill="#8e8e8e"/>
<g fill="none" stroke="#d4d4d4" stroke-width="0.75" stroke-linejoin="round" stroke-linecap="round">
<path d="M943.6,76.2 c-0.8,-1 -1.8,-1.9 -1.3,-2.6 c0.5,-0.6 1.5,0.2 2.1,1 v-4.8 c0,-0.8 1.2,-0.8 1.2,0 v3.2 v-4.4 c0,-0.8 1.2,-0.8 1.2,0 v4.2 v-3.8 c0,-0.8 1.2,-0.8 1.2,0 v4 v-2.8 c0,-0.8 1.2,-0.8 1.2,0 v4.8 c0,2.6 -1.5,4.6 -3.6,4.6 c-1.6,0 -2.3,-0.8 -3.2,-2 z"/>
<path d="M945.2,70.6 v3.4 M946.4,69.8 v3.8 M947.6,70.2 v3.6" stroke="#bdbdbd" stroke-width="0.5"/>
</g>
<rect x="958.8" y="68.1" width="12.3" height="12.6" rx="1" fill="#242424"/>
<g fill="none" stroke="#e0e0e0" stroke-width="0.75">
<circle cx="965" cy="74.4" r="3.6"/>
<circle cx="965" cy="70.4" r="1"/><circle cx="965" cy="78.4" r="1"/><circle cx="961" cy="74.4" r="1"/><circle cx="969" cy="74.4" r="1"/>
<circle cx="965" cy="74.4" r="0.9" fill="#e0e0e0"/>
</g>
<rect x="978" y="72.4" width="10.4" height="4.4" rx="1" fill="none" stroke="#9c9c9c" stroke-width="0.75"/>
<path d="M980,73.2 v1.2 M982,73.2 v1.6 M984,73.2 v1.2 M986,73.2 v1.6" stroke="#9c9c9c" stroke-width="0.5"/>
<g fill="none" stroke="#8e8e8e" stroke-width="0.75">
<rect x="923.4" y="87.1" width="10.3" height="10.8" rx="0.8"/>
<path d="M923.4,91.5 h10.3 M929.8,91.5 v6.4 M924.6,89.3 h7.5"/>
<path d="M950.4,96 A4.9,4.9 0 1 0 943.6,96" stroke="#909090"/>
<path d="M950.9,94.6 l-0.5,1.6 l-1.6,-0.4" stroke="#909090"/>
</g>
<g fill="none" stroke="#a0a0a0" stroke-width="0.75">
<path d="M965,87.8 v10.1 M961.3,91.6 h7.4 M961.3,94.2 h7.4"/>
<rect x="963.2" y="89.8" width="3.6" height="1.6" fill="#a0a0a0" stroke="none"/>
<rect x="963.2" y="94.4" width="3.6" height="1.6" fill="#a0a0a0" stroke="none"/>
<path d="M983,87.8 v10.1"/>
<path d="M979,90.2 l3.2,2.7 l-3.2,2.7 z" fill="#a0a0a0"/>
<path d="M987,90.2 l-3.2,2.7 l3.2,2.7 z"/>
</g>
<g fill="none" stroke="#d0d0d0" stroke-width="0.8">
<circle cx="927.4" cy="110.2" r="3.3"/><path d="M929.8,112.6 l2.9,2.8" stroke-width="1"/>
<circle cx="927.4" cy="110.2" r="1.1" fill="#d0d0d0" stroke="none"/>
<circle cx="945.6" cy="110.2" r="3.3"/><path d="M948,112.6 l2.9,2.8" stroke-width="1"/>
<path d="M944.2,110.2 h2.8" stroke-width="1"/>
</g>
<g fill="#d4d4d4" stroke="#d4d4d4" stroke-width="0.7">
<path d="M965,106.8 L965,114.7 M960.8,110.7 L965,110.7 L967.6,112.9 M965,106.8 L962.6,109.5" fill="none"/>
<circle cx="965" cy="106.8" r="1.1"/><circle cx="965" cy="114.9" r="1.1"/><circle cx="960.8" cy="110.7" r="1.1"/><circle cx="967.6" cy="112.9" r="1"/>
<circle cx="965" cy="110.7" r="1.5" fill="none"/>
</g>
<g fill="none" stroke="#8c8c8c" stroke-width="0.55">
<rect x="978.2" y="105.4" width="3.2" height="1.8" rx="0.9"/><rect x="981.6" y="105.4" width="3.2" height="1.8" rx="0.9"/><rect x="985" y="105.4" width="3.2" height="1.8" rx="0.9"/>
<rect x="978.2" y="109.8" width="3.2" height="1.8" rx="0.9"/><rect x="981.6" y="109.8" width="3.2" height="1.8" rx="0.9"/><rect x="985" y="109.8" width="3.2" height="1.8" rx="0.9"/>
<rect x="978.2" y="114.2" width="3.2" height="1.8" rx="0.9"/><rect x="981.6" y="114.2" width="3.2" height="1.8" rx="0.9"/><rect x="985" y="114.2" width="3.2" height="1.8" rx="0.9"/>
</g>
</svg>
<div class="a " style="left:916.3px;top:123px;width:79.7px;height:1px;background:#3a3a3a;"></div>
<div class="a " style="left:956px;top:123.5px;width:40px;height:12px;background:#3c3c3c;border-left:1px solid #2e2e2e;border-bottom:1px solid #2e2e2e;"></div>
<div class="a t" style="left:736.2px;top:126.17px;width:400px;text-align:center;font-size:6.6px;line-height:7.92px;color:#e6e6e6;">Primitives</div>
<div class="a t" style="left:775.8px;top:126.17px;width:400px;text-align:center;font-size:6.6px;line-height:7.92px;color:#e6e6e6;">Modifiers</div>
<svg class="a" style="left:916px;top:136px" width="80" height="44" viewBox="916 136 80 44">
<g fill="none" stroke="#cfcfcf" stroke-width="0.75" stroke-linejoin="round">
<path d="M923.6,145.2 l2.4,-2.4 h7.2 v7.6 l-2.4,2.6 h-7.2 z M923.6,145.2 h7.2 v7.8 M930.8,145.2 l2.4,-2.4"/>
<ellipse cx="946.6" cy="144.2" rx="4.4" ry="1.6"/><path d="M942.2,144.2 v6.6 a4.4,1.6 0 0 0 8.8,0 v-6.6"/>
<path d="M959.6,145.6 l2.4,-1.8 l7.6,3 l-1.2,2.6 l-1.8,1.4 l-7,-2.8 z M959.6,145.6 l7,2.8 l1.8,-1.4 M966.6,148.4 v2.4"/>
<path d="M977.4,145 c0,-1.8 3,-2.2 6,-1.4 c2.6,0.8 5.4,2.4 5.4,4 l-1.2,1.8 l-9,-3 z M977.4,145 v1.4 l8.8,3.6 l1.4,-0.6"/>
<rect x="923.2" y="162" width="10.8" height="7.6"/>
<ellipse cx="946.6" cy="165.8" rx="4.8" ry="3.2"/>
<path d="M960.2,170.4 l0.8,-2.8 l6.4,-6.4 l2,2 l-6.4,6.4 z M966.4,162.2 l2,2"/>
</g>
</svg>
<div class="a " style="left:916.3px;top:179px;width:79.7px;height:1px;background:#3a3a3a;"></div>
<div class="a " style="left:916.3px;top:179.8px;width:39.4px;height:10.6px;background:#3c3c3c;border-right:1px solid #2e2e2e;border-bottom:1px solid #2e2e2e;"></div>
<div class="a t" style="left:736.0px;top:181.87px;width:400px;text-align:center;font-size:6.6px;line-height:7.92px;color:#e6e6e6;">Properties</div>
<div class="a t" style="left:775.6px;top:181.87px;width:400px;text-align:center;font-size:6.6px;line-height:7.92px;color:#e6e6e6;">Layers</div>
<div class="a" style="left:916.3px;top:190.4px;width:79.7px;height:290px;overflow:hidden;">
</div>
<div class="a" style="left:0;top:0;width:1024px;height:589px;clip-path:inset(193.1px 28px 108.6px 916.3px);">
<svg class="a" style="left:0;top:0" width="1024" height="589">
<rect x="984.5" y="188.58" width="5.8" height="10.05" fill="#dc6a1e"/>
<rect x="984.5" y="198.63" width="5.8" height="20.10" fill="#7cf01a"/>
<rect x="984.5" y="218.73" width="5.8" height="10.05" fill="#dc6a1e"/>
<rect x="984.5" y="228.78" width="5.8" height="20.10" fill="#7cf01a"/>
<rect x="984.5" y="248.88" width="5.8" height="10.05" fill="#dc6a1e"/>
<rect x="984.5" y="258.93" width="5.8" height="10.05" fill="#7cf01a"/>
<rect x="984.5" y="268.98" width="5.8" height="10.05" fill="#f4ea00"/>
<path d="M961.3,192.99999999999997 v-1.4 a1.7,1.7 0 0 1 3.4,0 v1.4" fill="none" stroke="#6a6a6a" stroke-width="1"/><rect x="960.1" y="192.89999999999998" width="5.8" height="4.2" rx="0.4" fill="#6a6a6a"/><rect x="962.6" y="194.49999999999997" width="0.8" height="1" fill="#606060"/>
<path d="M976.4,193.6 Q980.4,189.0 984.4,193.6 Q980.4,198.2 976.4,193.6 Z" fill="#f4f4f4"/><circle cx="980.4" cy="193.6" r="1.5" fill="#555"/><circle cx="980.4" cy="193.6" r="0.7" fill="#f4f4f4"/>
<text x="920.7" y="195.70" font-size="5.6" fill="#e6e6e6" stroke="#e6e6e6" stroke-width="0.15" style="font-family:Liberation Sans,sans-serif">1100 Delay 1</text>
<path d="M961.3,203.04999999999998 v-1.4 a1.7,1.7 0 0 1 3.4,0 v1.4" fill="none" stroke="#6a6a6a" stroke-width="1"/><rect x="960.1" y="202.95" width="5.8" height="4.2" rx="0.4" fill="#6a6a6a"/><rect x="962.6" y="204.54999999999998" width="0.8" height="1" fill="#606060"/>
<path d="M976.4,203.65 Q980.4,199.05 984.4,203.65 Q980.4,208.25 976.4,203.65 Z" fill="#f4f4f4"/><circle cx="980.4" cy="203.65" r="1.5" fill="#555"/><circle cx="980.4" cy="203.65" r="0.7" fill="#f4f4f4"/>
<text x="920.7" y="205.75" font-size="5.6" fill="#e6e6e6" stroke="#e6e6e6" stroke-width="0.15" style="font-family:Liberation Sans,sans-serif">LEOPARD ...</text>
<path d="M961.3,213.09999999999997 v-1.4 a1.7,1.7 0 0 1 3.4,0 v1.4" fill="none" stroke="#6a6a6a" stroke-width="1"/><rect x="960.1" y="212.99999999999997" width="5.8" height="4.2" rx="0.4" fill="#6a6a6a"/><rect x="962.6" y="214.59999999999997" width="0.8" height="1" fill="#606060"/>
<path d="M976.4,213.7 Q980.4,209.1 984.4,213.7 Q980.4,218.29999999999998 976.4,213.7 Z" fill="#f4f4f4"/><circle cx="980.4" cy="213.7" r="1.5" fill="#555"/><circle cx="980.4" cy="213.7" r="0.7" fill="#f4f4f4"/>
<text x="920.7" y="215.80" font-size="5.6" fill="#e6e6e6" stroke="#e6e6e6" stroke-width="0.15" style="font-family:Liberation Sans,sans-serif">LYON Dela...</text>
<path d="M961.3,223.14999999999998 v-1.4 a1.7,1.7 0 0 1 3.4,0 v1.4" fill="none" stroke="#6a6a6a" stroke-width="1"/><rect x="960.1" y="223.04999999999998" width="5.8" height="4.2" rx="0.4" fill="#6a6a6a"/><rect x="962.6" y="224.64999999999998" width="0.8" height="1" fill="#606060"/>
<path d="M976.4,223.75 Q980.4,219.15 984.4,223.75 Q980.4,228.35 976.4,223.75 Z" fill="#f4f4f4"/><circle cx="980.4" cy="223.75" r="1.5" fill="#555"/><circle cx="980.4" cy="223.75" r="0.7" fill="#f4f4f4"/>
<text x="920.7" y="225.85" font-size="5.6" fill="#e6e6e6" stroke="#e6e6e6" stroke-width="0.15" style="font-family:Liberation Sans,sans-serif">1100 Delay 2</text>
<path d="M961.3,233.2 v-1.4 a1.7,1.7 0 0 1 3.4,0 v1.4" fill="none" stroke="#6a6a6a" stroke-width="1"/><rect x="960.1" y="233.1" width="5.8" height="4.2" rx="0.4" fill="#6a6a6a"/><rect x="962.6" y="234.7" width="0.8" height="1" fill="#606060"/>
<path d="M976.4,233.8 Q980.4,229.20000000000002 984.4,233.8 Q980.4,238.4 976.4,233.8 Z" fill="#f4f4f4"/><circle cx="980.4" cy="233.8" r="1.5" fill="#555"/><circle cx="980.4" cy="233.8" r="0.7" fill="#f4f4f4"/>
<text x="920.7" y="235.90" font-size="5.6" fill="#e6e6e6" stroke="#e6e6e6" stroke-width="0.15" style="font-family:Liberation Sans,sans-serif">LEOPARD ...</text>
<path d="M961.3,243.24999999999997 v-1.4 a1.7,1.7 0 0 1 3.4,0 v1.4" fill="none" stroke="#6a6a6a" stroke-width="1"/><rect x="960.1" y="243.14999999999998" width="5.8" height="4.2" rx="0.4" fill="#6a6a6a"/><rect x="962.6" y="244.74999999999997" width="0.8" height="1" fill="#606060"/>
<path d="M976.4,243.85 Q980.4,239.25 984.4,243.85 Q980.4,248.45 976.4,243.85 Z" fill="#f4f4f4"/><circle cx="980.4" cy="243.85" r="1.5" fill="#555"/><circle cx="980.4" cy="243.85" r="0.7" fill="#f4f4f4"/>
<text x="920.7" y="245.95" font-size="5.6" fill="#e6e6e6" stroke="#e6e6e6" stroke-width="0.15" style="font-family:Liberation Sans,sans-serif">LYON Dela...</text>
<path d="M961.3,253.29999999999998 v-1.4 a1.7,1.7 0 0 1 3.4,0 v1.4" fill="none" stroke="#6a6a6a" stroke-width="1"/><rect x="960.1" y="253.2" width="5.8" height="4.2" rx="0.4" fill="#6a6a6a"/><rect x="962.6" y="254.79999999999998" width="0.8" height="1" fill="#606060"/>
<path d="M976.4,253.9 Q980.4,249.3 984.4,253.9 Q980.4,258.5 976.4,253.9 Z" fill="#f4f4f4"/><circle cx="980.4" cy="253.9" r="1.5" fill="#555"/><circle cx="980.4" cy="253.9" r="0.7" fill="#f4f4f4"/>
<text x="920.7" y="256.00" font-size="5.6" fill="#e6e6e6" stroke="#e6e6e6" stroke-width="0.15" style="font-family:Liberation Sans,sans-serif">1100 Delay 3</text>
<path d="M961.3,263.34999999999997 v-1.4 a1.7,1.7 0 0 1 3.4,0 v1.4" fill="none" stroke="#6a6a6a" stroke-width="1"/><rect x="960.1" y="263.25" width="5.8" height="4.2" rx="0.4" fill="#6a6a6a"/><rect x="962.6" y="264.84999999999997" width="0.8" height="1" fill="#606060"/>
<path d="M976.4,263.95 Q980.4,259.34999999999997 984.4,263.95 Q980.4,268.55 976.4,263.95 Z" fill="#f4f4f4"/><circle cx="980.4" cy="263.95" r="1.5" fill="#555"/><circle cx="980.4" cy="263.95" r="0.7" fill="#f4f4f4"/>
<text x="920.7" y="266.05" font-size="5.6" fill="#e6e6e6" stroke="#e6e6e6" stroke-width="0.15" style="font-family:Liberation Sans,sans-serif">LEOPARD ...</text>
<path d="M961.3,273.4 v-1.4 a1.7,1.7 0 0 1 3.4,0 v1.4" fill="none" stroke="#6a6a6a" stroke-width="1"/><rect x="960.1" y="273.3" width="5.8" height="4.2" rx="0.4" fill="#6a6a6a"/><rect x="962.6" y="274.9" width="0.8" height="1" fill="#606060"/>
<path d="M976.4,274.0 Q980.4,269.4 984.4,274.0 Q980.4,278.6 976.4,274.0 Z" fill="#f4f4f4"/><circle cx="980.4" cy="274.0" r="1.5" fill="#555"/><circle cx="980.4" cy="274.0" r="0.7" fill="#f4f4f4"/>
<text x="920.7" y="276.10" font-size="5.6" fill="#e6e6e6" stroke="#e6e6e6" stroke-width="0.15" style="font-family:Liberation Sans,sans-serif">LYON Ring...</text>
<path d="M961.3,283.45 v-1.4 a1.7,1.7 0 0 1 3.4,0 v1.4" fill="none" stroke="#6a6a6a" stroke-width="1"/><rect x="960.1" y="283.35" width="5.8" height="4.2" rx="0.4" fill="#6a6a6a"/><rect x="962.6" y="284.95" width="0.8" height="1" fill="#606060"/>
<path d="M976.4,284.05 Q980.4,279.45 984.4,284.05 Q980.4,288.65000000000003 976.4,284.05 Z" fill="#f4f4f4"/><circle cx="980.4" cy="284.05" r="1.5" fill="#555"/><circle cx="980.4" cy="284.05" r="0.7" fill="#f4f4f4"/>
<text x="920.7" y="286.15" font-size="5.6" fill="#e6e6e6" stroke="#e6e6e6" stroke-width="0.15" style="font-family:Liberation Sans,sans-serif">Layer 22 (...</text>
<path d="M961.3,293.5 v-1.4 a1.7,1.7 0 0 1 3.4,0 v1.4" fill="none" stroke="#6a6a6a" stroke-width="1"/><rect x="960.1" y="293.40000000000003" width="5.8" height="4.2" rx="0.4" fill="#6a6a6a"/><rect x="962.6" y="295.0" width="0.8" height="1" fill="#606060"/>
<path d="M976.4,294.1 Q980.4,289.5 984.4,294.1 Q980.4,298.70000000000005 976.4,294.1 Z" fill="#f4f4f4"/><circle cx="980.4" cy="294.1" r="1.5" fill="#555"/><circle cx="980.4" cy="294.1" r="0.7" fill="#f4f4f4"/>
<text x="972" y="296.30" text-anchor="middle" font-size="6.4" fill="#e6e6e6" stroke="#e6e6e6" stroke-width="0.2" style="font-family:Liberation Sans,sans-serif">Y</text>
<text x="930.5" y="296.20" font-size="5.6" fill="#e6e6e6" stroke="#e6e6e6" stroke-width="0.15" style="font-family:Liberation Sans,sans-serif">0</text>
<path d="M961.3,303.54999999999995 v-1.4 a1.7,1.7 0 0 1 3.4,0 v1.4" fill="none" stroke="#6a6a6a" stroke-width="1"/><rect x="960.1" y="303.45" width="5.8" height="4.2" rx="0.4" fill="#6a6a6a"/><rect x="962.6" y="305.04999999999995" width="0.8" height="1" fill="#606060"/>
<path d="M976.4,304.15 Q980.4,299.54999999999995 984.4,304.15 Q980.4,308.75 976.4,304.15 Z" fill="#686868"/><circle cx="980.4" cy="304.15" r="1.3" fill="none" stroke="#5a5a5a" stroke-width="0.6"/>
<text x="972" y="306.35" text-anchor="middle" font-size="6.4" fill="#e6e6e6" stroke="#e6e6e6" stroke-width="0.2" style="font-family:Liberation Sans,sans-serif">Y</text>
<text x="930.5" y="306.25" font-size="5.6" fill="#e6e6e6" stroke="#e6e6e6" stroke-width="0.15" style="font-family:Liberation Sans,sans-serif">Band ...</text>
<path d="M961.3,313.59999999999997 v-1.4 a1.7,1.7 0 0 1 3.4,0 v1.4" fill="none" stroke="#6a6a6a" stroke-width="1"/><rect x="960.1" y="313.5" width="5.8" height="4.2" rx="0.4" fill="#6a6a6a"/><rect x="962.6" y="315.09999999999997" width="0.8" height="1" fill="#606060"/>
<path d="M976.4,314.2 Q980.4,309.59999999999997 984.4,314.2 Q980.4,318.8 976.4,314.2 Z" fill="#f4f4f4"/><circle cx="980.4" cy="314.2" r="1.5" fill="#555"/><circle cx="980.4" cy="314.2" r="0.7" fill="#f4f4f4"/>
<text x="972" y="316.40" text-anchor="middle" font-size="6.4" fill="#e6e6e6" stroke="#e6e6e6" stroke-width="0.2" style="font-family:Liberation Sans,sans-serif">Y</text>
<text x="930.5" y="316.30" font-size="5.6" fill="#e6e6e6" stroke="#e6e6e6" stroke-width="0.15" style="font-family:Liberation Sans,sans-serif">Delay ...</text>
<path d="M961.3,323.65 v-1.4 a1.7,1.7 0 0 1 3.4,0 v1.4" fill="none" stroke="#6a6a6a" stroke-width="1"/><rect x="960.1" y="323.55" width="5.8" height="4.2" rx="0.4" fill="#6a6a6a"/><rect x="962.6" y="325.15" width="0.8" height="1" fill="#606060"/>
<path d="M976.4,324.25 Q980.4,319.65 984.4,324.25 Q980.4,328.85 976.4,324.25 Z" fill="#f4f4f4"/><circle cx="980.4" cy="324.25" r="1.5" fill="#555"/><circle cx="980.4" cy="324.25" r="0.7" fill="#f4f4f4"/>
<text x="972" y="326.45" text-anchor="middle" font-size="6.4" fill="#e6e6e6" stroke="#e6e6e6" stroke-width="0.2" style="font-family:Liberation Sans,sans-serif">Y</text>
<text x="930.5" y="326.35" font-size="5.6" fill="#e6e6e6" stroke="#e6e6e6" stroke-width="0.15" style="font-family:Liberation Sans,sans-serif">FoH</text>
<path d="M961.3,333.7 v-1.4 a1.7,1.7 0 0 1 3.4,0 v1.4" fill="none" stroke="#6a6a6a" stroke-width="1"/><rect x="960.1" y="333.6" width="5.8" height="4.2" rx="0.4" fill="#6a6a6a"/><rect x="962.6" y="335.2" width="0.8" height="1" fill="#606060"/>
<path d="M976.4,334.3 Q980.4,329.7 984.4,334.3 Q980.4,338.90000000000003 976.4,334.3 Z" fill="#f4f4f4"/><circle cx="980.4" cy="334.3" r="1.5" fill="#555"/><circle cx="980.4" cy="334.3" r="0.7" fill="#f4f4f4"/>
<text x="972" y="336.50" text-anchor="middle" font-size="6.4" fill="#e6e6e6" stroke="#e6e6e6" stroke-width="0.2" style="font-family:Liberation Sans,sans-serif">Y</text>
<text x="930.5" y="336.40" font-size="5.6" fill="#e6e6e6" stroke="#e6e6e6" stroke-width="0.15" style="font-family:Liberation Sans,sans-serif">Layer1</text>
<path d="M961.3,343.75 v-1.4 a1.7,1.7 0 0 1 3.4,0 v1.4" fill="none" stroke="#6a6a6a" stroke-width="1"/><rect x="960.1" y="343.65000000000003" width="5.8" height="4.2" rx="0.4" fill="#6a6a6a"/><rect x="962.6" y="345.25" width="0.8" height="1" fill="#606060"/>
<path d="M976.4,344.35 Q980.4,339.75 984.4,344.35 Q980.4,348.95000000000005 976.4,344.35 Z" fill="#f4f4f4"/><circle cx="980.4" cy="344.35" r="1.5" fill="#555"/><circle cx="980.4" cy="344.35" r="0.7" fill="#f4f4f4"/>
<text x="972" y="346.55" text-anchor="middle" font-size="6.4" fill="#e6e6e6" stroke="#e6e6e6" stroke-width="0.2" style="font-family:Liberation Sans,sans-serif">Y</text>
<text x="930.5" y="346.45" font-size="5.6" fill="#e6e6e6" stroke="#e6e6e6" stroke-width="0.15" style="font-family:Liberation Sans,sans-serif">Stage</text>
<path d="M961.3,353.79999999999995 v-1.4 a1.7,1.7 0 0 1 3.4,0 v1.4" fill="none" stroke="#6a6a6a" stroke-width="1"/><rect x="960.1" y="353.7" width="5.8" height="4.2" rx="0.4" fill="#6a6a6a"/><rect x="962.6" y="355.29999999999995" width="0.8" height="1" fill="#606060"/>
<path d="M976.4,354.4 Q980.4,349.79999999999995 984.4,354.4 Q980.4,359.0 976.4,354.4 Z" fill="#f4f4f4"/><circle cx="980.4" cy="354.4" r="1.5" fill="#555"/><circle cx="980.4" cy="354.4" r="0.7" fill="#f4f4f4"/>
<text x="972" y="356.60" text-anchor="middle" font-size="6.4" fill="#e6e6e6" stroke="#e6e6e6" stroke-width="0.2" style="font-family:Liberation Sans,sans-serif">Y</text>
<text x="930.5" y="356.50" font-size="5.6" fill="#e6e6e6" stroke="#e6e6e6" stroke-width="0.15" style="font-family:Liberation Sans,sans-serif">Truss ...</text>
<path d="M961.3,363.85 v-1.4 a1.7,1.7 0 0 1 3.4,0 v1.4" fill="none" stroke="#6a6a6a" stroke-width="1"/><rect x="960.1" y="363.75000000000006" width="5.8" height="4.2" rx="0.4" fill="#6a6a6a"/><rect x="962.6" y="365.35" width="0.8" height="1" fill="#606060"/>
<path d="M976.4,364.45000000000005 Q980.4,359.85 984.4,364.45000000000005 Q980.4,369.05000000000007 976.4,364.45000000000005 Z" fill="#f4f4f4"/><circle cx="980.4" cy="364.45000000000005" r="1.5" fill="#555"/><circle cx="980.4" cy="364.45000000000005" r="0.7" fill="#f4f4f4"/>
<text x="920.7" y="366.55" font-size="5.6" fill="#e6e6e6" stroke="#e6e6e6" stroke-width="0.15" style="font-family:Liberation Sans,sans-serif">Layer 23 (...</text>
<path d="M961.3,373.9 v-1.4 a1.7,1.7 0 0 1 3.4,0 v1.4" fill="none" stroke="#f8f8f8" stroke-width="1"/><rect x="960.1" y="373.8" width="5.8" height="4.2" rx="0.4" fill="#f8f8f8"/><rect x="962.6" y="375.4" width="0.8" height="1" fill="#555"/>
<path d="M976.4,374.5 Q980.4,369.9 984.4,374.5 Q980.4,379.1 976.4,374.5 Z" fill="#686868"/><circle cx="980.4" cy="374.5" r="1.3" fill="none" stroke="#5a5a5a" stroke-width="0.6"/>
<text x="972" y="376.70" text-anchor="middle" font-size="6.4" fill="#e6e6e6" stroke="#e6e6e6" stroke-width="0.2" style="font-family:Liberation Sans,sans-serif">Y</text>
<text x="930.5" y="376.60" font-size="5.6" fill="#e6e6e6" stroke="#e6e6e6" stroke-width="0.15" style="font-family:Liberation Sans,sans-serif">Audien...</text>
<path d="M961.3,383.95 v-1.4 a1.7,1.7 0 0 1 3.4,0 v1.4" fill="none" stroke="#f8f8f8" stroke-width="1"/><rect x="960.1" y="383.85" width="5.8" height="4.2" rx="0.4" fill="#f8f8f8"/><rect x="962.6" y="385.45" width="0.8" height="1" fill="#555"/>
<path d="M976.4,384.55 Q980.4,379.95 984.4,384.55 Q980.4,389.15000000000003 976.4,384.55 Z" fill="#686868"/><circle cx="980.4" cy="384.55" r="1.3" fill="none" stroke="#5a5a5a" stroke-width="0.6"/>
<text x="972" y="386.75" text-anchor="middle" font-size="6.4" fill="#e6e6e6" stroke="#e6e6e6" stroke-width="0.2" style="font-family:Liberation Sans,sans-serif">Y</text>
<text x="930.5" y="386.65" font-size="5.6" fill="#e6e6e6" stroke="#e6e6e6" stroke-width="0.15" style="font-family:Liberation Sans,sans-serif">Audien...</text>
<path d="M961.3,394.0 v-1.4 a1.7,1.7 0 0 1 3.4,0 v1.4" fill="none" stroke="#f8f8f8" stroke-width="1"/><rect x="960.1" y="393.90000000000003" width="5.8" height="4.2" rx="0.4" fill="#f8f8f8"/><rect x="962.6" y="395.5" width="0.8" height="1" fill="#555"/>
<path d="M976.4,394.6 Q980.4,390.0 984.4,394.6 Q980.4,399.20000000000005 976.4,394.6 Z" fill="#686868"/><circle cx="980.4" cy="394.6" r="1.3" fill="none" stroke="#5a5a5a" stroke-width="0.6"/>
<text x="972" y="396.80" text-anchor="middle" font-size="6.4" fill="#e6e6e6" stroke="#e6e6e6" stroke-width="0.2" style="font-family:Liberation Sans,sans-serif">Y</text>
<text x="930.5" y="396.70" font-size="5.6" fill="#e6e6e6" stroke="#e6e6e6" stroke-width="0.15" style="font-family:Liberation Sans,sans-serif">Audien...</text>
<path d="M961.3,404.04999999999995 v-1.4 a1.7,1.7 0 0 1 3.4,0 v1.4" fill="none" stroke="#f8f8f8" stroke-width="1"/><rect x="960.1" y="403.95" width="5.8" height="4.2" rx="0.4" fill="#f8f8f8"/><rect x="962.6" y="405.54999999999995" width="0.8" height="1" fill="#555"/>
<path d="M976.4,404.65 Q980.4,400.04999999999995 984.4,404.65 Q980.4,409.25 976.4,404.65 Z" fill="#686868"/><circle cx="980.4" cy="404.65" r="1.3" fill="none" stroke="#5a5a5a" stroke-width="0.6"/>
<text x="972" y="406.85" text-anchor="middle" font-size="6.4" fill="#e6e6e6" stroke="#e6e6e6" stroke-width="0.2" style="font-family:Liberation Sans,sans-serif">Y</text>
<text x="930.5" y="406.75" font-size="5.6" fill="#e6e6e6" stroke="#e6e6e6" stroke-width="0.15" style="font-family:Liberation Sans,sans-serif">Audien...</text>
<path d="M961.3,414.1 v-1.4 a1.7,1.7 0 0 1 3.4,0 v1.4" fill="none" stroke="#f8f8f8" stroke-width="1"/><rect x="960.1" y="414.00000000000006" width="5.8" height="4.2" rx="0.4" fill="#f8f8f8"/><rect x="962.6" y="415.6" width="0.8" height="1" fill="#555"/>
<path d="M976.4,414.70000000000005 Q980.4,410.1 984.4,414.70000000000005 Q980.4,419.30000000000007 976.4,414.70000000000005 Z" fill="#686868"/><circle cx="980.4" cy="414.70000000000005" r="1.3" fill="none" stroke="#5a5a5a" stroke-width="0.6"/>
<text x="972" y="416.90" text-anchor="middle" font-size="6.4" fill="#e6e6e6" stroke="#e6e6e6" stroke-width="0.2" style="font-family:Liberation Sans,sans-serif">Y</text>
<text x="930.5" y="416.80" font-size="5.6" fill="#e6e6e6" stroke="#e6e6e6" stroke-width="0.15" style="font-family:Liberation Sans,sans-serif">Audien...</text>
<path d="M961.3,424.15 v-1.4 a1.7,1.7 0 0 1 3.4,0 v1.4" fill="none" stroke="#6a6a6a" stroke-width="1"/><rect x="960.1" y="424.05" width="5.8" height="4.2" rx="0.4" fill="#6a6a6a"/><rect x="962.6" y="425.65" width="0.8" height="1" fill="#606060"/>
<path d="M976.4,424.75 Q980.4,420.15 984.4,424.75 Q980.4,429.35 976.4,424.75 Z" fill="#f4f4f4"/><circle cx="980.4" cy="424.75" r="1.5" fill="#555"/><circle cx="980.4" cy="424.75" r="0.7" fill="#f4f4f4"/>
<text x="972" y="426.95" text-anchor="middle" font-size="6.4" fill="#e6e6e6" stroke="#e6e6e6" stroke-width="0.2" style="font-family:Liberation Sans,sans-serif">Y</text>
<text x="930.5" y="426.85" font-size="5.6" fill="#e6e6e6" stroke="#e6e6e6" stroke-width="0.15" style="font-family:Liberation Sans,sans-serif">Building</text>
<path d="M961.3,434.2 v-1.4 a1.7,1.7 0 0 1 3.4,0 v1.4" fill="none" stroke="#6a6a6a" stroke-width="1"/><rect x="960.1" y="434.1" width="5.8" height="4.2" rx="0.4" fill="#6a6a6a"/><rect x="962.6" y="435.7" width="0.8" height="1" fill="#606060"/>
<path d="M976.4,434.8 Q980.4,430.2 984.4,434.8 Q980.4,439.40000000000003 976.4,434.8 Z" fill="#f4f4f4"/><circle cx="980.4" cy="434.8" r="1.5" fill="#555"/><circle cx="980.4" cy="434.8" r="0.7" fill="#f4f4f4"/>
<text x="972" y="437.00" text-anchor="middle" font-size="6.4" fill="#e6e6e6" stroke="#e6e6e6" stroke-width="0.2" style="font-family:Liberation Sans,sans-serif">Y</text>
<text x="930.5" y="436.90" font-size="5.6" fill="#e6e6e6" stroke="#e6e6e6" stroke-width="0.15" style="font-family:Liberation Sans,sans-serif">Field o...</text>
<path d="M961.3,444.25 v-1.4 a1.7,1.7 0 0 1 3.4,0 v1.4" fill="none" stroke="#6a6a6a" stroke-width="1"/><rect x="960.1" y="444.15000000000003" width="5.8" height="4.2" rx="0.4" fill="#6a6a6a"/><rect x="962.6" y="445.75" width="0.8" height="1" fill="#606060"/>
<path d="M976.4,444.85 Q980.4,440.25 984.4,444.85 Q980.4,449.45000000000005 976.4,444.85 Z" fill="#686868"/><circle cx="980.4" cy="444.85" r="1.3" fill="none" stroke="#5a5a5a" stroke-width="0.6"/>
<text x="972" y="447.05" text-anchor="middle" font-size="6.4" fill="#e6e6e6" stroke="#e6e6e6" stroke-width="0.2" style="font-family:Liberation Sans,sans-serif">Y</text>
<text x="930.5" y="446.95" font-size="5.6" fill="#e6e6e6" stroke="#e6e6e6" stroke-width="0.15" style="font-family:Liberation Sans,sans-serif">Layer0</text>
<path d="M961.3,454.29999999999995 v-1.4 a1.7,1.7 0 0 1 3.4,0 v1.4" fill="none" stroke="#6a6a6a" stroke-width="1"/><rect x="960.1" y="454.2" width="5.8" height="4.2" rx="0.4" fill="#6a6a6a"/><rect x="962.6" y="455.79999999999995" width="0.8" height="1" fill="#606060"/>
<path d="M976.4,454.9 Q980.4,450.29999999999995 984.4,454.9 Q980.4,459.5 976.4,454.9 Z" fill="#686868"/><circle cx="980.4" cy="454.9" r="1.3" fill="none" stroke="#5a5a5a" stroke-width="0.6"/>
<text x="972" y="457.10" text-anchor="middle" font-size="6.4" fill="#e6e6e6" stroke="#e6e6e6" stroke-width="0.2" style="font-family:Liberation Sans,sans-serif">Y</text>
<text x="930.5" y="457.00" font-size="5.6" fill="#e6e6e6" stroke="#e6e6e6" stroke-width="0.15" style="font-family:Liberation Sans,sans-serif">Roof</text>
<path d="M961.3,464.35 v-1.4 a1.7,1.7 0 0 1 3.4,0 v1.4" fill="none" stroke="#6a6a6a" stroke-width="1"/><rect x="960.1" y="464.25000000000006" width="5.8" height="4.2" rx="0.4" fill="#6a6a6a"/><rect x="962.6" y="465.85" width="0.8" height="1" fill="#606060"/>
<path d="M976.4,464.95000000000005 Q980.4,460.35 984.4,464.95000000000005 Q980.4,469.55000000000007 976.4,464.95000000000005 Z" fill="#f4f4f4"/><circle cx="980.4" cy="464.95000000000005" r="1.5" fill="#555"/><circle cx="980.4" cy="464.95000000000005" r="0.7" fill="#f4f4f4"/>
<text x="972" y="467.15" text-anchor="middle" font-size="6.4" fill="#e6e6e6" stroke="#e6e6e6" stroke-width="0.2" style="font-family:Liberation Sans,sans-serif">Y</text>
<text x="930.5" y="467.05" font-size="5.6" fill="#e6e6e6" stroke="#e6e6e6" stroke-width="0.15" style="font-family:Liberation Sans,sans-serif">Seatin...</text>
<path d="M961.3,474.4 v-1.4 a1.7,1.7 0 0 1 3.4,0 v1.4" fill="none" stroke="#6a6a6a" stroke-width="1"/><rect x="960.1" y="474.3" width="5.8" height="4.2" rx="0.4" fill="#6a6a6a"/><rect x="962.6" y="475.9" width="0.8" height="1" fill="#606060"/>
<path d="M976.4,475.0 Q980.4,470.4 984.4,475.0 Q980.4,479.6 976.4,475.0 Z" fill="#f4f4f4"/><circle cx="980.4" cy="475.0" r="1.5" fill="#555"/><circle cx="980.4" cy="475.0" r="0.7" fill="#f4f4f4"/>
<text x="972" y="477.20" text-anchor="middle" font-size="6.4" fill="#e6e6e6" stroke="#e6e6e6" stroke-width="0.2" style="font-family:Liberation Sans,sans-serif">Y</text>
<text x="930.5" y="477.10" font-size="5.6" fill="#e6e6e6" stroke="#e6e6e6" stroke-width="0.15" style="font-family:Liberation Sans,sans-serif">Seatin...</text>
<rect x="990.3" y="190.4" width="3.8" height="290" fill="#474747"/>
<rect x="990.3" y="294.8" width="3.8" height="184.8" rx="1.5" fill="#8e8e8e"/>
</svg>
</div>
<div class="a " style="left:916.3px;top:190.4px;width:1px;height:290px;background:#3a3a3a;"></div>
<div class="a " style="left:918.9px;top:484.4px;width:35.1px;height:9.8px;background:#626262;border-radius:1.5px;"></div>
<div class="a t" style="left:736.4499999999999px;top:486.44px;width:400px;text-align:center;font-size:5.5px;line-height:6.60px;color:#e6e6e6;">Add</div>
<div class="a " style="left:958px;top:484.4px;width:35.3px;height:9.8px;background:#626262;border-radius:1.5px;"></div>
<div class="a t" style="left:775.65px;top:486.44px;width:400px;text-align:center;font-size:5.5px;line-height:6.60px;color:#e6e6e6;">Delete</div>
<div class="a " style="left:916.3px;top:496px;width:79.7px;height:1px;background:#353535;"></div>
<div class="a t" style="left:756px;top:498.97px;width:400px;text-align:center;font-size:6.6px;line-height:7.92px;color:#e6e6e6;">Viewport</div>
<div class="a " style="left:919px;top:511px;width:35px;height:9.9px;background:#5585d8;border-radius:1.5px;"></div>
<div class="a t" style="left:736.5px;top:513.09px;width:400px;text-align:center;font-size:5.5px;line-height:6.60px;color:#e6e6e6;">Viewport 1</div>
<div class="a " style="left:958px;top:511px;width:35.3px;height:9.9px;background:#626262;border-radius:1.5px;"></div>
<div class="a t" style="left:775.65px;top:513.09px;width:400px;text-align:center;font-size:5.5px;line-height:6.60px;color:#e6e6e6;">Viewport 2</div>
<div class="a " style="left:919px;top:525.2px;width:35px;height:9.7px;background:#626262;border-radius:1.5px;"></div>
<div class="a t" style="left:736.5px;top:527.19px;width:400px;text-align:center;font-size:5.5px;line-height:6.60px;color:#e6e6e6;">Viewport 3</div>
<div class="a " style="left:958px;top:525.2px;width:35.3px;height:9.7px;background:#626262;border-radius:1.5px;"></div>
<div class="a t" style="left:775.65px;top:527.19px;width:400px;text-align:center;font-size:5.5px;line-height:6.60px;color:#e6e6e6;">Viewport 4</div>
<div class="a " style="left:919px;top:539.2px;width:35px;height:9.7px;background:#626262;border-radius:1.5px;"></div>
<div class="a t" style="left:736.5px;top:541.19px;width:400px;text-align:center;font-size:5.5px;line-height:6.60px;color:#e6e6e6;">Multiple</div>
<div class="a " style="left:958px;top:539.2px;width:35.3px;height:9.7px;background:#5585d8;border-radius:1.5px;"></div>
<div class="a t" style="left:775.65px;top:541.19px;width:400px;text-align:center;font-size:5.5px;line-height:6.60px;color:#e6e6e6;">Create New</div>
</body></html>
